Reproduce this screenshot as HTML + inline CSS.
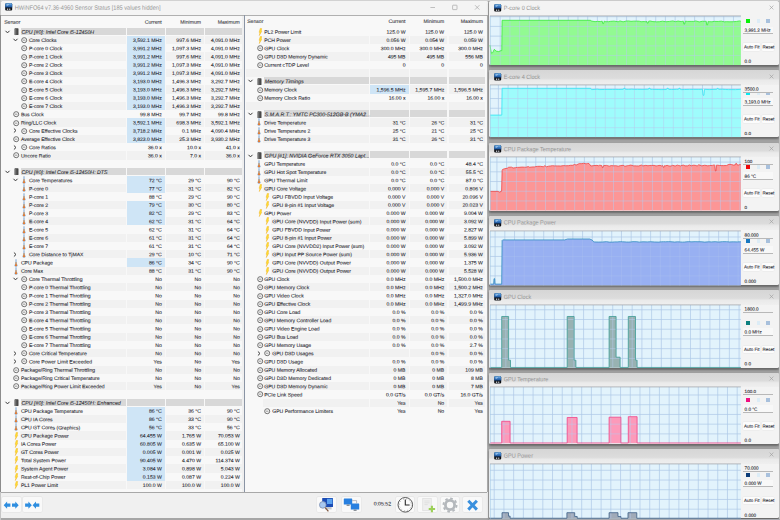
<!DOCTYPE html><html><head><meta charset="utf-8"><title>HWiNFO64 Sensor Status</title><style>
html,body{margin:0;padding:0}
body{width:780px;height:520px;overflow:hidden;position:relative;background:#a6a6a6;font-family:"Liberation Sans",sans-serif;font-size:5.1px;color:#2a2a30}
div,svg{position:absolute}
.i{overflow:visible}
.t{white-space:nowrap;height:8.24px;line-height:8.24px;font-size:5.1px}
.v{width:60px;text-align:right}
.gh{font-style:italic;color:#26262c}
.hd{color:#34343a}
.ab{height:8.24px;background:#f1f1f1}
.hb{height:6.95px;background:#d8d8d8}
.hl{height:8.34px;background:#cfe5f6}
.mw{left:0.7px;top:0.9px;width:487.1px;height:516.7px;background:#f0f0f0;border-radius:1.5px 1.5px 0 0}
.pn{background:#f8f8f8}
.tt{color:#8e8e8e;font-size:5.75px;height:15px;line-height:15px;white-space:nowrap}
.gw{background:#f3f3f3;border-radius:1.6px;box-shadow:0 1.8px 2.2px 0px rgba(60,60,60,0.6)}
.wt{color:#8e8e8e;font-size:5.9px;height:10px;line-height:10px}
.sm{font-size:4.6px;height:7px;line-height:7px;color:#2a2a30}
.ul{left:743.4px;width:29.8px;height:0.55px;background:#b8b8b8}
.vb{left:743.4px;width:29.8px;height:7px;background:#f8f8f8}
.sw{width:3.9px;height:4px}
.bt{height:7.6px;line-height:7.6px;font-size:4.5px;text-align:center;background:#fcfcfc;border-radius:1px;box-shadow:0 0 0 0.4px #e8e8e8;color:#2a2a30;white-space:nowrap}
text{stroke:#24242c;stroke-width:0.08px}
text.gh{font-style:italic;fill:#26262c;font-size:5.25px}
text.hd{fill:#34343a}
text.tt{fill:#949494;font-size:6.33px;stroke:none}
text.wt{fill:#949494;font-size:6.24px;stroke:none}
text.sm{font-size:4.6px}
text.bs{font-size:4.5px}
text.tm{font-size:5.2px}
.tb{background:#f9f9f9;border-radius:1px;box-shadow:0 0 0 0.4px #e0e0e0}
</style></head><body>
<div style="left:0;top:0;width:780px;height:1.1px;background:#d2d2d2"></div>
<div style="left:0;top:0;width:1px;height:520px;background:#c6c6c6"></div>
<div class="mw"></div>
<div style="left:0.7px;top:0.9px;width:487.1px;height:14.2px;background:#f4f4f4;border-radius:1.5px 1.5px 0 0"></div>
<svg class="i" style="left:4.60px;top:3.10px" width="7.4" height="7.8" viewBox="0 0 7.4 7.8"><defs><linearGradient id="fg0" x1="0" y1="0" x2="0" y2="1"><stop offset="0" stop-color="#5aa8f0"/><stop offset="1" stop-color="#174a90"/></linearGradient></defs><rect x="0.2" y="0.2" width="7" height="7.4" rx="1.1" fill="#0c0e12"/><path d="M1.3 0.2H6.1A1.1 1.1 0 0 1 7.2 1.3V4.6H0.2V1.3A1.1 1.1 0 0 1 1.3 0.2Z" fill="url(#fg0)"/><path d="M2.2 0.9V3.0M3.3 0.9V2.2M4.6 1.0H5.6" stroke="#e8f2fc" stroke-width="0.55" fill="none"/><rect x="1.9" y="5.5" width="1.3" height="1.5" fill="#b8bcc4"/><rect x="3.9" y="5.5" width="1.5" height="1.5" fill="#9ca0a8"/></svg>
<svg class="i" style="left:428px;top:3px" width="56" height="10" viewBox="428 3 56 10"><path d="M430.4 7.5H435" stroke="#9a9a9a" stroke-width="0.6"/><rect x="452.6" y="5.2" width="4.4" height="4.4" rx="0.5" fill="none" stroke="#9a9a9a" stroke-width="0.6"/><path d="M475 5.2L479.4 9.6M479.4 5.2L475 9.6" stroke="#9a9a9a" stroke-width="0.6"/></svg>
<div style="left:0.7px;top:14.8px;width:487.1px;height:0.7px;background:#b0b0b0"></div>
<div class="pn" style="left:1.0px;top:15.7px;width:242.8px;height:476px"></div>
<div class="pn" style="left:244.9px;top:15.7px;width:242.0px;height:476px"></div>
<div style="left:242.2px;top:15.7px;width:1.6px;height:476px;background:#efefef"></div>
<div style="left:243.85px;top:15.3px;width:0.7px;height:476.6px;background:#8a94a4"></div>
<div style="left:0;top:15.3px;width:1.0px;height:477.2px;background:#8c8c8c"></div>
<div style="left:486.8px;top:15.3px;width:0.7px;height:476.6px;background:#b0b0b0"></div>
<div style="left:0.9px;top:491.7px;width:486.6px;height:0.8px;background:#a8a8a8"></div>


<div class="hb" style="left:20.70px;top:27.80px;width:105.10px"></div>
<div class="hb" style="left:127.00px;top:27.80px;width:38.00px"></div>
<div class="hb" style="left:166.20px;top:27.80px;width:37.90px"></div>
<div class="hb" style="left:205.30px;top:27.80px;width:36.70px"></div>
<svg class="i" style="left:5.10px;top:30.02px" width="5" height="4" viewBox="0 0 5 4"><path d="M0.5 0.8L2.5 2.9L4.5 0.8" fill="none" stroke="#3a3a3a" stroke-width="1.0"/></svg>
<svg class="i" style="left:13.80px;top:28.12px" width="5" height="7.4" viewBox="0 0 5 7.4"><rect x="0.5" y="0.3" width="4" height="6.8" rx="0.6" fill="#4a4a4a"/><rect x="1.1" y="0.3" width="1.2" height="6.8" fill="#777"/></svg>
<div class="ab" style="left:28.10px;top:35.94px;width:97.70px"></div>
<div class="ab" style="left:127.00px;top:35.94px;width:38.00px"></div>
<div class="ab" style="left:166.20px;top:35.94px;width:37.90px"></div>
<div class="ab" style="left:205.30px;top:35.94px;width:36.70px"></div>
<div class="hl" style="left:127.00px;top:35.89px;width:38.00px"></div>
<svg class="i" style="left:12.90px;top:38.26px" width="5" height="4" viewBox="0 0 5 4"><path d="M0.5 0.8L2.5 2.9L4.5 0.8" fill="none" stroke="#3a3a3a" stroke-width="1.0"/></svg>
<svg class="i" style="left:21.00px;top:37.11px" width="6.4" height="6.4" viewBox="0 0 6.4 6.4"><circle cx="3.2" cy="3.2" r="2.55" fill="#f2f2f2" stroke="#5e5e5e" stroke-width="0.85"/><path d="M1.9 3.2H4.4" stroke="#777" stroke-width="0.7"/></svg>
<div class="hl" style="left:127.00px;top:44.13px;width:38.00px"></div>
<svg class="i" style="left:21.00px;top:45.35px" width="6.4" height="6.4" viewBox="0 0 6.4 6.4"><circle cx="3.2" cy="3.2" r="2.55" fill="#f2f2f2" stroke="#5e5e5e" stroke-width="0.85"/><path d="M1.9 3.2H4.4" stroke="#777" stroke-width="0.7"/></svg>
<div class="ab" style="left:28.10px;top:52.42px;width:97.70px"></div>
<div class="ab" style="left:127.00px;top:52.42px;width:38.00px"></div>
<div class="ab" style="left:166.20px;top:52.42px;width:37.90px"></div>
<div class="ab" style="left:205.30px;top:52.42px;width:36.70px"></div>
<div class="hl" style="left:127.00px;top:52.37px;width:38.00px"></div>
<svg class="i" style="left:21.00px;top:53.59px" width="6.4" height="6.4" viewBox="0 0 6.4 6.4"><circle cx="3.2" cy="3.2" r="2.55" fill="#f2f2f2" stroke="#5e5e5e" stroke-width="0.85"/><path d="M1.9 3.2H4.4" stroke="#777" stroke-width="0.7"/></svg>
<div class="hl" style="left:127.00px;top:60.61px;width:38.00px"></div>
<svg class="i" style="left:21.00px;top:61.83px" width="6.4" height="6.4" viewBox="0 0 6.4 6.4"><circle cx="3.2" cy="3.2" r="2.55" fill="#f2f2f2" stroke="#5e5e5e" stroke-width="0.85"/><path d="M1.9 3.2H4.4" stroke="#777" stroke-width="0.7"/></svg>
<div class="ab" style="left:28.10px;top:68.90px;width:97.70px"></div>
<div class="ab" style="left:127.00px;top:68.90px;width:38.00px"></div>
<div class="ab" style="left:166.20px;top:68.90px;width:37.90px"></div>
<div class="ab" style="left:205.30px;top:68.90px;width:36.70px"></div>
<div class="hl" style="left:127.00px;top:68.85px;width:38.00px"></div>
<svg class="i" style="left:21.00px;top:70.07px" width="6.4" height="6.4" viewBox="0 0 6.4 6.4"><circle cx="3.2" cy="3.2" r="2.55" fill="#f2f2f2" stroke="#5e5e5e" stroke-width="0.85"/><path d="M1.9 3.2H4.4" stroke="#777" stroke-width="0.7"/></svg>
<div class="hl" style="left:127.00px;top:77.09px;width:38.00px"></div>
<svg class="i" style="left:21.00px;top:78.31px" width="6.4" height="6.4" viewBox="0 0 6.4 6.4"><circle cx="3.2" cy="3.2" r="2.55" fill="#f2f2f2" stroke="#5e5e5e" stroke-width="0.85"/><path d="M1.9 3.2H4.4" stroke="#777" stroke-width="0.7"/></svg>
<div class="ab" style="left:28.10px;top:85.38px;width:97.70px"></div>
<div class="ab" style="left:127.00px;top:85.38px;width:38.00px"></div>
<div class="ab" style="left:166.20px;top:85.38px;width:37.90px"></div>
<div class="ab" style="left:205.30px;top:85.38px;width:36.70px"></div>
<div class="hl" style="left:127.00px;top:85.33px;width:38.00px"></div>
<svg class="i" style="left:21.00px;top:86.55px" width="6.4" height="6.4" viewBox="0 0 6.4 6.4"><circle cx="3.2" cy="3.2" r="2.55" fill="#f2f2f2" stroke="#5e5e5e" stroke-width="0.85"/><path d="M1.9 3.2H4.4" stroke="#777" stroke-width="0.7"/></svg>
<div class="hl" style="left:127.00px;top:93.57px;width:38.00px"></div>
<svg class="i" style="left:21.00px;top:94.79px" width="6.4" height="6.4" viewBox="0 0 6.4 6.4"><circle cx="3.2" cy="3.2" r="2.55" fill="#f2f2f2" stroke="#5e5e5e" stroke-width="0.85"/><path d="M1.9 3.2H4.4" stroke="#777" stroke-width="0.7"/></svg>
<div class="ab" style="left:28.10px;top:101.86px;width:97.70px"></div>
<div class="ab" style="left:127.00px;top:101.86px;width:38.00px"></div>
<div class="ab" style="left:166.20px;top:101.86px;width:37.90px"></div>
<div class="ab" style="left:205.30px;top:101.86px;width:36.70px"></div>
<div class="hl" style="left:127.00px;top:101.81px;width:38.00px"></div>
<svg class="i" style="left:21.00px;top:103.03px" width="6.4" height="6.4" viewBox="0 0 6.4 6.4"><circle cx="3.2" cy="3.2" r="2.55" fill="#f2f2f2" stroke="#5e5e5e" stroke-width="0.85"/><path d="M1.9 3.2H4.4" stroke="#777" stroke-width="0.7"/></svg>
<svg class="i" style="left:13.20px;top:111.27px" width="6.4" height="6.4" viewBox="0 0 6.4 6.4"><circle cx="3.2" cy="3.2" r="2.55" fill="#f2f2f2" stroke="#5e5e5e" stroke-width="0.85"/><path d="M1.9 3.2H4.4" stroke="#777" stroke-width="0.7"/></svg>
<div class="ab" style="left:20.10px;top:118.34px;width:105.70px"></div>
<div class="ab" style="left:127.00px;top:118.34px;width:38.00px"></div>
<div class="ab" style="left:166.20px;top:118.34px;width:37.90px"></div>
<div class="ab" style="left:205.30px;top:118.34px;width:36.70px"></div>
<div class="hl" style="left:127.00px;top:118.29px;width:38.00px"></div>
<svg class="i" style="left:13.20px;top:119.51px" width="6.4" height="6.4" viewBox="0 0 6.4 6.4"><circle cx="3.2" cy="3.2" r="2.55" fill="#f2f2f2" stroke="#5e5e5e" stroke-width="0.85"/><path d="M1.9 3.2H4.4" stroke="#777" stroke-width="0.7"/></svg>
<div class="hl" style="left:127.00px;top:126.53px;width:38.00px"></div>
<svg class="i" style="left:13.20px;top:128.20px" width="4" height="5" viewBox="0 0 4 5"><path d="M0.9 0.5L3.0 2.5L0.9 4.5" fill="none" stroke="#3a3a3a" stroke-width="1.0"/></svg>
<svg class="i" style="left:21.00px;top:127.75px" width="6.4" height="6.4" viewBox="0 0 6.4 6.4"><circle cx="3.2" cy="3.2" r="2.55" fill="#f2f2f2" stroke="#5e5e5e" stroke-width="0.85"/><path d="M1.9 3.2H4.4" stroke="#777" stroke-width="0.7"/></svg>
<div class="ab" style="left:20.10px;top:134.82px;width:105.70px"></div>
<div class="ab" style="left:127.00px;top:134.82px;width:38.00px"></div>
<div class="ab" style="left:166.20px;top:134.82px;width:37.90px"></div>
<div class="ab" style="left:205.30px;top:134.82px;width:36.70px"></div>
<div class="hl" style="left:127.00px;top:134.77px;width:38.00px"></div>
<svg class="i" style="left:13.20px;top:135.99px" width="6.4" height="6.4" viewBox="0 0 6.4 6.4"><circle cx="3.2" cy="3.2" r="2.55" fill="#f2f2f2" stroke="#5e5e5e" stroke-width="0.85"/><path d="M1.9 3.2H4.4" stroke="#777" stroke-width="0.7"/></svg>
<svg class="i" style="left:13.20px;top:144.68px" width="4" height="5" viewBox="0 0 4 5"><path d="M0.9 0.5L3.0 2.5L0.9 4.5" fill="none" stroke="#3a3a3a" stroke-width="1.0"/></svg>
<svg class="i" style="left:21.00px;top:144.23px" width="6.4" height="6.4" viewBox="0 0 6.4 6.4"><circle cx="3.2" cy="3.2" r="2.55" fill="#f2f2f2" stroke="#5e5e5e" stroke-width="0.85"/><path d="M1.9 3.2H4.4" stroke="#777" stroke-width="0.7"/></svg>
<div class="ab" style="left:20.10px;top:151.30px;width:105.70px"></div>
<div class="ab" style="left:127.00px;top:151.30px;width:38.00px"></div>
<div class="ab" style="left:166.20px;top:151.30px;width:37.90px"></div>
<div class="ab" style="left:205.30px;top:151.30px;width:36.70px"></div>
<svg class="i" style="left:13.20px;top:152.47px" width="6.4" height="6.4" viewBox="0 0 6.4 6.4"><circle cx="3.2" cy="3.2" r="2.55" fill="#f2f2f2" stroke="#5e5e5e" stroke-width="0.85"/><path d="M1.9 3.2H4.4" stroke="#777" stroke-width="0.7"/></svg>
<div class="hb" style="left:20.70px;top:167.88px;width:105.10px"></div>
<div class="hb" style="left:127.00px;top:167.88px;width:38.00px"></div>
<div class="hb" style="left:166.20px;top:167.88px;width:37.90px"></div>
<div class="hb" style="left:205.30px;top:167.88px;width:36.70px"></div>
<svg class="i" style="left:5.10px;top:170.10px" width="5" height="4" viewBox="0 0 5 4"><path d="M0.5 0.8L2.5 2.9L4.5 0.8" fill="none" stroke="#3a3a3a" stroke-width="1.0"/></svg>
<svg class="i" style="left:13.80px;top:168.20px" width="5" height="7.4" viewBox="0 0 5 7.4"><rect x="0.5" y="0.3" width="4" height="6.8" rx="0.6" fill="#4a4a4a"/><rect x="1.1" y="0.3" width="1.2" height="6.8" fill="#777"/></svg>
<div class="hl" style="left:127.00px;top:175.97px;width:38.00px"></div>
<svg class="i" style="left:12.90px;top:178.34px" width="5" height="4" viewBox="0 0 5 4"><path d="M0.5 0.8L2.5 2.9L4.5 0.8" fill="none" stroke="#3a3a3a" stroke-width="1.0"/></svg>
<svg class="i" style="left:21.65px;top:176.14px" width="4" height="8" viewBox="0 0 4 8"><rect x="1.05" y="0.15" width="1.9" height="6.2" rx="0.95" fill="#94b4d6"/><rect x="1.55" y="0.7" width="0.9" height="2.6" fill="#dce8f4"/><circle cx="2" cy="6.25" r="1.5" fill="#8eaed2"/><rect x="1.55" y="3.2" width="0.9" height="3.1" fill="#f08a2c"/><circle cx="2" cy="6.25" r="0.95" fill="#f07218"/></svg>
<div class="ab" style="left:28.10px;top:184.26px;width:97.70px"></div>
<div class="ab" style="left:127.00px;top:184.26px;width:38.00px"></div>
<div class="ab" style="left:166.20px;top:184.26px;width:37.90px"></div>
<div class="ab" style="left:205.30px;top:184.26px;width:36.70px"></div>
<div class="hl" style="left:127.00px;top:184.21px;width:38.00px"></div>
<svg class="i" style="left:21.65px;top:184.38px" width="4" height="8" viewBox="0 0 4 8"><rect x="1.05" y="0.15" width="1.9" height="6.2" rx="0.95" fill="#94b4d6"/><rect x="1.55" y="0.7" width="0.9" height="2.6" fill="#dce8f4"/><circle cx="2" cy="6.25" r="1.5" fill="#8eaed2"/><rect x="1.55" y="3.2" width="0.9" height="3.1" fill="#f08a2c"/><circle cx="2" cy="6.25" r="0.95" fill="#f07218"/></svg>
<svg class="i" style="left:21.65px;top:192.62px" width="4" height="8" viewBox="0 0 4 8"><rect x="1.05" y="0.15" width="1.9" height="6.2" rx="0.95" fill="#94b4d6"/><rect x="1.55" y="0.7" width="0.9" height="2.6" fill="#dce8f4"/><circle cx="2" cy="6.25" r="1.5" fill="#8eaed2"/><rect x="1.55" y="3.2" width="0.9" height="3.1" fill="#f08a2c"/><circle cx="2" cy="6.25" r="0.95" fill="#f07218"/></svg>
<div class="ab" style="left:28.10px;top:200.74px;width:97.70px"></div>
<div class="ab" style="left:127.00px;top:200.74px;width:38.00px"></div>
<div class="ab" style="left:166.20px;top:200.74px;width:37.90px"></div>
<div class="ab" style="left:205.30px;top:200.74px;width:36.70px"></div>
<div class="hl" style="left:127.00px;top:200.69px;width:38.00px"></div>
<svg class="i" style="left:21.65px;top:200.86px" width="4" height="8" viewBox="0 0 4 8"><rect x="1.05" y="0.15" width="1.9" height="6.2" rx="0.95" fill="#94b4d6"/><rect x="1.55" y="0.7" width="0.9" height="2.6" fill="#dce8f4"/><circle cx="2" cy="6.25" r="1.5" fill="#8eaed2"/><rect x="1.55" y="3.2" width="0.9" height="3.1" fill="#f08a2c"/><circle cx="2" cy="6.25" r="0.95" fill="#f07218"/></svg>
<div class="hl" style="left:127.00px;top:208.93px;width:38.00px"></div>
<svg class="i" style="left:21.65px;top:209.10px" width="4" height="8" viewBox="0 0 4 8"><rect x="1.05" y="0.15" width="1.9" height="6.2" rx="0.95" fill="#94b4d6"/><rect x="1.55" y="0.7" width="0.9" height="2.6" fill="#dce8f4"/><circle cx="2" cy="6.25" r="1.5" fill="#8eaed2"/><rect x="1.55" y="3.2" width="0.9" height="3.1" fill="#f08a2c"/><circle cx="2" cy="6.25" r="0.95" fill="#f07218"/></svg>
<div class="ab" style="left:28.10px;top:217.22px;width:97.70px"></div>
<div class="ab" style="left:127.00px;top:217.22px;width:38.00px"></div>
<div class="ab" style="left:166.20px;top:217.22px;width:37.90px"></div>
<div class="ab" style="left:205.30px;top:217.22px;width:36.70px"></div>
<div class="hl" style="left:127.00px;top:217.17px;width:38.00px"></div>
<svg class="i" style="left:21.65px;top:217.34px" width="4" height="8" viewBox="0 0 4 8"><rect x="1.05" y="0.15" width="1.9" height="6.2" rx="0.95" fill="#94b4d6"/><rect x="1.55" y="0.7" width="0.9" height="2.6" fill="#dce8f4"/><circle cx="2" cy="6.25" r="1.5" fill="#8eaed2"/><rect x="1.55" y="3.2" width="0.9" height="3.1" fill="#f08a2c"/><circle cx="2" cy="6.25" r="0.95" fill="#f07218"/></svg>
<svg class="i" style="left:21.65px;top:225.58px" width="4" height="8" viewBox="0 0 4 8"><rect x="1.05" y="0.15" width="1.9" height="6.2" rx="0.95" fill="#94b4d6"/><rect x="1.55" y="0.7" width="0.9" height="2.6" fill="#dce8f4"/><circle cx="2" cy="6.25" r="1.5" fill="#8eaed2"/><rect x="1.55" y="3.2" width="0.9" height="3.1" fill="#f08a2c"/><circle cx="2" cy="6.25" r="0.95" fill="#f07218"/></svg>
<div class="ab" style="left:28.10px;top:233.70px;width:97.70px"></div>
<div class="ab" style="left:127.00px;top:233.70px;width:38.00px"></div>
<div class="ab" style="left:166.20px;top:233.70px;width:37.90px"></div>
<div class="ab" style="left:205.30px;top:233.70px;width:36.70px"></div>
<svg class="i" style="left:21.65px;top:233.82px" width="4" height="8" viewBox="0 0 4 8"><rect x="1.05" y="0.15" width="1.9" height="6.2" rx="0.95" fill="#94b4d6"/><rect x="1.55" y="0.7" width="0.9" height="2.6" fill="#dce8f4"/><circle cx="2" cy="6.25" r="1.5" fill="#8eaed2"/><rect x="1.55" y="3.2" width="0.9" height="3.1" fill="#f08a2c"/><circle cx="2" cy="6.25" r="0.95" fill="#f07218"/></svg>
<svg class="i" style="left:21.65px;top:242.06px" width="4" height="8" viewBox="0 0 4 8"><rect x="1.05" y="0.15" width="1.9" height="6.2" rx="0.95" fill="#94b4d6"/><rect x="1.55" y="0.7" width="0.9" height="2.6" fill="#dce8f4"/><circle cx="2" cy="6.25" r="1.5" fill="#8eaed2"/><rect x="1.55" y="3.2" width="0.9" height="3.1" fill="#f08a2c"/><circle cx="2" cy="6.25" r="0.95" fill="#f07218"/></svg>
<div class="ab" style="left:28.10px;top:250.18px;width:97.70px"></div>
<div class="ab" style="left:127.00px;top:250.18px;width:38.00px"></div>
<div class="ab" style="left:166.20px;top:250.18px;width:37.90px"></div>
<div class="ab" style="left:205.30px;top:250.18px;width:36.70px"></div>
<svg class="i" style="left:13.20px;top:251.80px" width="4" height="5" viewBox="0 0 4 5"><path d="M0.9 0.5L3.0 2.5L0.9 4.5" fill="none" stroke="#3a3a3a" stroke-width="1.0"/></svg>
<svg class="i" style="left:21.65px;top:250.30px" width="4" height="8" viewBox="0 0 4 8"><rect x="1.05" y="0.15" width="1.9" height="6.2" rx="0.95" fill="#94b4d6"/><rect x="1.55" y="0.7" width="0.9" height="2.6" fill="#dce8f4"/><circle cx="2" cy="6.25" r="1.5" fill="#8eaed2"/><rect x="1.55" y="3.2" width="0.9" height="3.1" fill="#f08a2c"/><circle cx="2" cy="6.25" r="0.95" fill="#f07218"/></svg>
<div class="hl" style="left:127.00px;top:258.37px;width:38.00px"></div>
<svg class="i" style="left:13.85px;top:258.54px" width="4" height="8" viewBox="0 0 4 8"><rect x="1.05" y="0.15" width="1.9" height="6.2" rx="0.95" fill="#94b4d6"/><rect x="1.55" y="0.7" width="0.9" height="2.6" fill="#dce8f4"/><circle cx="2" cy="6.25" r="1.5" fill="#8eaed2"/><rect x="1.55" y="3.2" width="0.9" height="3.1" fill="#f08a2c"/><circle cx="2" cy="6.25" r="0.95" fill="#f07218"/></svg>
<div class="ab" style="left:20.10px;top:266.66px;width:105.70px"></div>
<div class="ab" style="left:127.00px;top:266.66px;width:38.00px"></div>
<div class="ab" style="left:166.20px;top:266.66px;width:37.90px"></div>
<div class="ab" style="left:205.30px;top:266.66px;width:36.70px"></div>
<svg class="i" style="left:13.85px;top:266.78px" width="4" height="8" viewBox="0 0 4 8"><rect x="1.05" y="0.15" width="1.9" height="6.2" rx="0.95" fill="#94b4d6"/><rect x="1.55" y="0.7" width="0.9" height="2.6" fill="#dce8f4"/><circle cx="2" cy="6.25" r="1.5" fill="#8eaed2"/><rect x="1.55" y="3.2" width="0.9" height="3.1" fill="#f08a2c"/><circle cx="2" cy="6.25" r="0.95" fill="#f07218"/></svg>
<svg class="i" style="left:12.90px;top:277.22px" width="5" height="4" viewBox="0 0 5 4"><path d="M0.5 0.8L2.5 2.9L4.5 0.8" fill="none" stroke="#3a3a3a" stroke-width="1.0"/></svg>
<svg class="i" style="left:21.00px;top:276.07px" width="6.4" height="6.4" viewBox="0 0 6.4 6.4"><circle cx="3.2" cy="3.2" r="2.55" fill="#f2f2f2" stroke="#5e5e5e" stroke-width="0.85"/><path d="M1.9 3.2H4.4" stroke="#777" stroke-width="0.7"/></svg>
<div class="ab" style="left:28.10px;top:283.14px;width:97.70px"></div>
<div class="ab" style="left:127.00px;top:283.14px;width:38.00px"></div>
<div class="ab" style="left:166.20px;top:283.14px;width:37.90px"></div>
<div class="ab" style="left:205.30px;top:283.14px;width:36.70px"></div>
<svg class="i" style="left:21.00px;top:284.31px" width="6.4" height="6.4" viewBox="0 0 6.4 6.4"><circle cx="3.2" cy="3.2" r="2.55" fill="#f2f2f2" stroke="#5e5e5e" stroke-width="0.85"/><path d="M1.9 3.2H4.4" stroke="#777" stroke-width="0.7"/></svg>
<svg class="i" style="left:21.00px;top:292.55px" width="6.4" height="6.4" viewBox="0 0 6.4 6.4"><circle cx="3.2" cy="3.2" r="2.55" fill="#f2f2f2" stroke="#5e5e5e" stroke-width="0.85"/><path d="M1.9 3.2H4.4" stroke="#777" stroke-width="0.7"/></svg>
<div class="ab" style="left:28.10px;top:299.62px;width:97.70px"></div>
<div class="ab" style="left:127.00px;top:299.62px;width:38.00px"></div>
<div class="ab" style="left:166.20px;top:299.62px;width:37.90px"></div>
<div class="ab" style="left:205.30px;top:299.62px;width:36.70px"></div>
<svg class="i" style="left:21.00px;top:300.79px" width="6.4" height="6.4" viewBox="0 0 6.4 6.4"><circle cx="3.2" cy="3.2" r="2.55" fill="#f2f2f2" stroke="#5e5e5e" stroke-width="0.85"/><path d="M1.9 3.2H4.4" stroke="#777" stroke-width="0.7"/></svg>
<svg class="i" style="left:21.00px;top:309.03px" width="6.4" height="6.4" viewBox="0 0 6.4 6.4"><circle cx="3.2" cy="3.2" r="2.55" fill="#f2f2f2" stroke="#5e5e5e" stroke-width="0.85"/><path d="M1.9 3.2H4.4" stroke="#777" stroke-width="0.7"/></svg>
<div class="ab" style="left:28.10px;top:316.10px;width:97.70px"></div>
<div class="ab" style="left:127.00px;top:316.10px;width:38.00px"></div>
<div class="ab" style="left:166.20px;top:316.10px;width:37.90px"></div>
<div class="ab" style="left:205.30px;top:316.10px;width:36.70px"></div>
<svg class="i" style="left:21.00px;top:317.27px" width="6.4" height="6.4" viewBox="0 0 6.4 6.4"><circle cx="3.2" cy="3.2" r="2.55" fill="#f2f2f2" stroke="#5e5e5e" stroke-width="0.85"/><path d="M1.9 3.2H4.4" stroke="#777" stroke-width="0.7"/></svg>
<svg class="i" style="left:21.00px;top:325.51px" width="6.4" height="6.4" viewBox="0 0 6.4 6.4"><circle cx="3.2" cy="3.2" r="2.55" fill="#f2f2f2" stroke="#5e5e5e" stroke-width="0.85"/><path d="M1.9 3.2H4.4" stroke="#777" stroke-width="0.7"/></svg>
<div class="ab" style="left:28.10px;top:332.58px;width:97.70px"></div>
<div class="ab" style="left:127.00px;top:332.58px;width:38.00px"></div>
<div class="ab" style="left:166.20px;top:332.58px;width:37.90px"></div>
<div class="ab" style="left:205.30px;top:332.58px;width:36.70px"></div>
<svg class="i" style="left:21.00px;top:333.75px" width="6.4" height="6.4" viewBox="0 0 6.4 6.4"><circle cx="3.2" cy="3.2" r="2.55" fill="#f2f2f2" stroke="#5e5e5e" stroke-width="0.85"/><path d="M1.9 3.2H4.4" stroke="#777" stroke-width="0.7"/></svg>
<svg class="i" style="left:21.00px;top:341.99px" width="6.4" height="6.4" viewBox="0 0 6.4 6.4"><circle cx="3.2" cy="3.2" r="2.55" fill="#f2f2f2" stroke="#5e5e5e" stroke-width="0.85"/><path d="M1.9 3.2H4.4" stroke="#777" stroke-width="0.7"/></svg>
<div class="ab" style="left:28.10px;top:349.06px;width:97.70px"></div>
<div class="ab" style="left:127.00px;top:349.06px;width:38.00px"></div>
<div class="ab" style="left:166.20px;top:349.06px;width:37.90px"></div>
<div class="ab" style="left:205.30px;top:349.06px;width:36.70px"></div>
<svg class="i" style="left:13.20px;top:350.68px" width="4" height="5" viewBox="0 0 4 5"><path d="M0.9 0.5L3.0 2.5L0.9 4.5" fill="none" stroke="#3a3a3a" stroke-width="1.0"/></svg>
<svg class="i" style="left:21.00px;top:350.23px" width="6.4" height="6.4" viewBox="0 0 6.4 6.4"><circle cx="3.2" cy="3.2" r="2.55" fill="#f2f2f2" stroke="#5e5e5e" stroke-width="0.85"/><path d="M1.9 3.2H4.4" stroke="#777" stroke-width="0.7"/></svg>
<svg class="i" style="left:13.20px;top:358.92px" width="4" height="5" viewBox="0 0 4 5"><path d="M0.9 0.5L3.0 2.5L0.9 4.5" fill="none" stroke="#3a3a3a" stroke-width="1.0"/></svg>
<svg class="i" style="left:21.00px;top:358.47px" width="6.4" height="6.4" viewBox="0 0 6.4 6.4"><circle cx="3.2" cy="3.2" r="2.55" fill="#f2f2f2" stroke="#5e5e5e" stroke-width="0.85"/><path d="M1.9 3.2H4.4" stroke="#777" stroke-width="0.7"/></svg>
<div class="ab" style="left:20.10px;top:365.54px;width:105.70px"></div>
<div class="ab" style="left:127.00px;top:365.54px;width:38.00px"></div>
<div class="ab" style="left:166.20px;top:365.54px;width:37.90px"></div>
<div class="ab" style="left:205.30px;top:365.54px;width:36.70px"></div>
<svg class="i" style="left:13.20px;top:366.71px" width="6.4" height="6.4" viewBox="0 0 6.4 6.4"><circle cx="3.2" cy="3.2" r="2.55" fill="#f2f2f2" stroke="#5e5e5e" stroke-width="0.85"/><path d="M1.9 3.2H4.4" stroke="#777" stroke-width="0.7"/></svg>
<svg class="i" style="left:13.20px;top:374.95px" width="6.4" height="6.4" viewBox="0 0 6.4 6.4"><circle cx="3.2" cy="3.2" r="2.55" fill="#f2f2f2" stroke="#5e5e5e" stroke-width="0.85"/><path d="M1.9 3.2H4.4" stroke="#777" stroke-width="0.7"/></svg>
<div class="ab" style="left:20.10px;top:382.02px;width:105.70px"></div>
<div class="ab" style="left:127.00px;top:382.02px;width:38.00px"></div>
<div class="ab" style="left:166.20px;top:382.02px;width:37.90px"></div>
<div class="ab" style="left:205.30px;top:382.02px;width:36.70px"></div>
<svg class="i" style="left:13.20px;top:383.19px" width="6.4" height="6.4" viewBox="0 0 6.4 6.4"><circle cx="3.2" cy="3.2" r="2.55" fill="#f2f2f2" stroke="#5e5e5e" stroke-width="0.85"/><path d="M1.9 3.2H4.4" stroke="#777" stroke-width="0.7"/></svg>
<div class="hb" style="left:20.70px;top:398.60px;width:105.10px"></div>
<div class="hb" style="left:127.00px;top:398.60px;width:38.00px"></div>
<div class="hb" style="left:166.20px;top:398.60px;width:37.90px"></div>
<div class="hb" style="left:205.30px;top:398.60px;width:36.70px"></div>
<svg class="i" style="left:5.10px;top:400.82px" width="5" height="4" viewBox="0 0 5 4"><path d="M0.5 0.8L2.5 2.9L4.5 0.8" fill="none" stroke="#3a3a3a" stroke-width="1.0"/></svg>
<svg class="i" style="left:13.80px;top:398.92px" width="5" height="7.4" viewBox="0 0 5 7.4"><rect x="0.5" y="0.3" width="4" height="6.8" rx="0.6" fill="#4a4a4a"/><rect x="1.1" y="0.3" width="1.2" height="6.8" fill="#777"/></svg>
<div class="hl" style="left:127.00px;top:406.69px;width:38.00px"></div>
<svg class="i" style="left:13.85px;top:406.86px" width="4" height="8" viewBox="0 0 4 8"><rect x="1.05" y="0.15" width="1.9" height="6.2" rx="0.95" fill="#94b4d6"/><rect x="1.55" y="0.7" width="0.9" height="2.6" fill="#dce8f4"/><circle cx="2" cy="6.25" r="1.5" fill="#8eaed2"/><rect x="1.55" y="3.2" width="0.9" height="3.1" fill="#f08a2c"/><circle cx="2" cy="6.25" r="0.95" fill="#f07218"/></svg>
<div class="ab" style="left:20.10px;top:414.98px;width:105.70px"></div>
<div class="ab" style="left:127.00px;top:414.98px;width:38.00px"></div>
<div class="ab" style="left:166.20px;top:414.98px;width:37.90px"></div>
<div class="ab" style="left:205.30px;top:414.98px;width:36.70px"></div>
<div class="hl" style="left:127.00px;top:414.93px;width:38.00px"></div>
<svg class="i" style="left:13.85px;top:415.10px" width="4" height="8" viewBox="0 0 4 8"><rect x="1.05" y="0.15" width="1.9" height="6.2" rx="0.95" fill="#94b4d6"/><rect x="1.55" y="0.7" width="0.9" height="2.6" fill="#dce8f4"/><circle cx="2" cy="6.25" r="1.5" fill="#8eaed2"/><rect x="1.55" y="3.2" width="0.9" height="3.1" fill="#f08a2c"/><circle cx="2" cy="6.25" r="0.95" fill="#f07218"/></svg>
<div class="hl" style="left:127.00px;top:423.17px;width:38.00px"></div>
<svg class="i" style="left:13.85px;top:423.34px" width="4" height="8" viewBox="0 0 4 8"><rect x="1.05" y="0.15" width="1.9" height="6.2" rx="0.95" fill="#94b4d6"/><rect x="1.55" y="0.7" width="0.9" height="2.6" fill="#dce8f4"/><circle cx="2" cy="6.25" r="1.5" fill="#8eaed2"/><rect x="1.55" y="3.2" width="0.9" height="3.1" fill="#f08a2c"/><circle cx="2" cy="6.25" r="0.95" fill="#f07218"/></svg>
<div class="ab" style="left:20.10px;top:431.46px;width:105.70px"></div>
<div class="ab" style="left:127.00px;top:431.46px;width:38.00px"></div>
<div class="ab" style="left:166.20px;top:431.46px;width:37.90px"></div>
<div class="ab" style="left:205.30px;top:431.46px;width:36.70px"></div>
<div class="hl" style="left:127.00px;top:431.41px;width:38.00px"></div>
<svg class="i" style="left:14.20px;top:431.58px" width="4.4" height="8" viewBox="0 0 4.4 8"><path d="M2.2 0.4L3.7 0.5L3.2 3.2L3.8 3.3L1.3 7.6L1.9 4.4L1.1 4.3Z" fill="#ffe030" stroke="#f0a818" stroke-width="0.4" stroke-linejoin="round"/></svg>
<div class="hl" style="left:127.00px;top:439.65px;width:38.00px"></div>
<svg class="i" style="left:14.20px;top:439.82px" width="4.4" height="8" viewBox="0 0 4.4 8"><path d="M2.2 0.4L3.7 0.5L3.2 3.2L3.8 3.3L1.3 7.6L1.9 4.4L1.1 4.3Z" fill="#ffe030" stroke="#f0a818" stroke-width="0.4" stroke-linejoin="round"/></svg>
<div class="ab" style="left:20.10px;top:447.94px;width:105.70px"></div>
<div class="ab" style="left:127.00px;top:447.94px;width:38.00px"></div>
<div class="ab" style="left:166.20px;top:447.94px;width:37.90px"></div>
<div class="ab" style="left:205.30px;top:447.94px;width:36.70px"></div>
<div class="hl" style="left:127.00px;top:447.89px;width:38.00px"></div>
<svg class="i" style="left:14.20px;top:448.06px" width="4.4" height="8" viewBox="0 0 4.4 8"><path d="M2.2 0.4L3.7 0.5L3.2 3.2L3.8 3.3L1.3 7.6L1.9 4.4L1.1 4.3Z" fill="#ffe030" stroke="#f0a818" stroke-width="0.4" stroke-linejoin="round"/></svg>
<div class="hl" style="left:127.00px;top:456.13px;width:38.00px"></div>
<svg class="i" style="left:14.20px;top:456.30px" width="4.4" height="8" viewBox="0 0 4.4 8"><path d="M2.2 0.4L3.7 0.5L3.2 3.2L3.8 3.3L1.3 7.6L1.9 4.4L1.1 4.3Z" fill="#ffe030" stroke="#f0a818" stroke-width="0.4" stroke-linejoin="round"/></svg>
<div class="ab" style="left:20.10px;top:464.42px;width:105.70px"></div>
<div class="ab" style="left:127.00px;top:464.42px;width:38.00px"></div>
<div class="ab" style="left:166.20px;top:464.42px;width:37.90px"></div>
<div class="ab" style="left:205.30px;top:464.42px;width:36.70px"></div>
<div class="hl" style="left:127.00px;top:464.37px;width:38.00px"></div>
<svg class="i" style="left:14.20px;top:464.54px" width="4.4" height="8" viewBox="0 0 4.4 8"><path d="M2.2 0.4L3.7 0.5L3.2 3.2L3.8 3.3L1.3 7.6L1.9 4.4L1.1 4.3Z" fill="#ffe030" stroke="#f0a818" stroke-width="0.4" stroke-linejoin="round"/></svg>
<div class="hl" style="left:127.00px;top:472.61px;width:38.00px"></div>
<svg class="i" style="left:14.20px;top:472.78px" width="4.4" height="8" viewBox="0 0 4.4 8"><path d="M2.2 0.4L3.7 0.5L3.2 3.2L3.8 3.3L1.3 7.6L1.9 4.4L1.1 4.3Z" fill="#ffe030" stroke="#f0a818" stroke-width="0.4" stroke-linejoin="round"/></svg>
<div class="ab" style="left:20.10px;top:480.90px;width:105.70px"></div>
<div class="ab" style="left:127.00px;top:480.90px;width:38.00px"></div>
<div class="ab" style="left:166.20px;top:480.90px;width:37.90px"></div>
<div class="ab" style="left:205.30px;top:480.90px;width:36.70px"></div>
<svg class="i" style="left:14.20px;top:481.02px" width="4.4" height="8" viewBox="0 0 4.4 8"><path d="M2.2 0.4L3.7 0.5L3.2 3.2L3.8 3.3L1.3 7.6L1.9 4.4L1.1 4.3Z" fill="#ffe030" stroke="#f0a818" stroke-width="0.4" stroke-linejoin="round"/></svg>
<svg class="i" style="left:257.50px;top:27.82px" width="4.4" height="8" viewBox="0 0 4.4 8"><path d="M2.2 0.4L3.7 0.5L3.2 3.2L3.8 3.3L1.3 7.6L1.9 4.4L1.1 4.3Z" fill="#ffe030" stroke="#f0a818" stroke-width="0.4" stroke-linejoin="round"/></svg>
<div class="ab" style="left:263.40px;top:35.94px;width:105.80px"></div>
<div class="ab" style="left:370.40px;top:35.94px;width:38.30px"></div>
<div class="ab" style="left:409.90px;top:35.94px;width:37.40px"></div>
<div class="ab" style="left:448.50px;top:35.94px;width:36.90px"></div>
<svg class="i" style="left:257.50px;top:36.06px" width="4.4" height="8" viewBox="0 0 4.4 8"><path d="M2.2 0.4L3.7 0.5L3.2 3.2L3.8 3.3L1.3 7.6L1.9 4.4L1.1 4.3Z" fill="#ffe030" stroke="#f0a818" stroke-width="0.4" stroke-linejoin="round"/></svg>
<svg class="i" style="left:256.50px;top:45.35px" width="6.4" height="6.4" viewBox="0 0 6.4 6.4"><circle cx="3.2" cy="3.2" r="2.55" fill="#f2f2f2" stroke="#5e5e5e" stroke-width="0.85"/><path d="M1.9 3.2H4.4" stroke="#777" stroke-width="0.7"/></svg>
<div class="ab" style="left:263.40px;top:52.42px;width:105.80px"></div>
<div class="ab" style="left:370.40px;top:52.42px;width:38.30px"></div>
<div class="ab" style="left:409.90px;top:52.42px;width:37.40px"></div>
<div class="ab" style="left:448.50px;top:52.42px;width:36.90px"></div>
<svg class="i" style="left:256.50px;top:53.59px" width="6.4" height="6.4" viewBox="0 0 6.4 6.4"><circle cx="3.2" cy="3.2" r="2.55" fill="#f2f2f2" stroke="#5e5e5e" stroke-width="0.85"/><path d="M1.9 3.2H4.4" stroke="#777" stroke-width="0.7"/></svg>
<svg class="i" style="left:256.50px;top:61.83px" width="6.4" height="6.4" viewBox="0 0 6.4 6.4"><circle cx="3.2" cy="3.2" r="2.55" fill="#f2f2f2" stroke="#5e5e5e" stroke-width="0.85"/><path d="M1.9 3.2H4.4" stroke="#777" stroke-width="0.7"/></svg>
<div class="ab" style="left:245.80px;top:68.90px;width:123.40px"></div>
<div class="ab" style="left:370.40px;top:68.90px;width:38.30px"></div>
<div class="ab" style="left:409.90px;top:68.90px;width:37.40px"></div>
<div class="ab" style="left:448.50px;top:68.90px;width:36.90px"></div>
<div class="hb" style="left:264.00px;top:77.24px;width:105.20px"></div>
<div class="hb" style="left:370.40px;top:77.24px;width:38.30px"></div>
<div class="hb" style="left:409.90px;top:77.24px;width:37.40px"></div>
<div class="hb" style="left:448.50px;top:77.24px;width:36.90px"></div>
<svg class="i" style="left:248.40px;top:79.46px" width="5" height="4" viewBox="0 0 5 4"><path d="M0.5 0.8L2.5 2.9L4.5 0.8" fill="none" stroke="#3a3a3a" stroke-width="1.0"/></svg>
<svg class="i" style="left:257.10px;top:77.56px" width="5" height="7.4" viewBox="0 0 5 7.4"><rect x="0.5" y="0.3" width="4" height="6.8" rx="0.6" fill="#4a4a4a"/><rect x="1.1" y="0.3" width="1.2" height="6.8" fill="#777"/></svg>
<div class="ab" style="left:263.40px;top:85.38px;width:105.80px"></div>
<div class="ab" style="left:370.40px;top:85.38px;width:38.30px"></div>
<div class="ab" style="left:409.90px;top:85.38px;width:37.40px"></div>
<div class="ab" style="left:448.50px;top:85.38px;width:36.90px"></div>
<div class="hl" style="left:370.40px;top:85.33px;width:38.30px"></div>
<svg class="i" style="left:256.50px;top:86.55px" width="6.4" height="6.4" viewBox="0 0 6.4 6.4"><circle cx="3.2" cy="3.2" r="2.55" fill="#f2f2f2" stroke="#5e5e5e" stroke-width="0.85"/><path d="M1.9 3.2H4.4" stroke="#777" stroke-width="0.7"/></svg>
<svg class="i" style="left:256.50px;top:94.79px" width="6.4" height="6.4" viewBox="0 0 6.4 6.4"><circle cx="3.2" cy="3.2" r="2.55" fill="#f2f2f2" stroke="#5e5e5e" stroke-width="0.85"/><path d="M1.9 3.2H4.4" stroke="#777" stroke-width="0.7"/></svg>
<div class="ab" style="left:245.80px;top:101.86px;width:123.40px"></div>
<div class="ab" style="left:370.40px;top:101.86px;width:38.30px"></div>
<div class="ab" style="left:409.90px;top:101.86px;width:37.40px"></div>
<div class="ab" style="left:448.50px;top:101.86px;width:36.90px"></div>
<div class="hb" style="left:264.00px;top:110.20px;width:105.20px"></div>
<div class="hb" style="left:370.40px;top:110.20px;width:38.30px"></div>
<div class="hb" style="left:409.90px;top:110.20px;width:37.40px"></div>
<div class="hb" style="left:448.50px;top:110.20px;width:36.90px"></div>
<svg class="i" style="left:248.40px;top:112.42px" width="5" height="4" viewBox="0 0 5 4"><path d="M0.5 0.8L2.5 2.9L4.5 0.8" fill="none" stroke="#3a3a3a" stroke-width="1.0"/></svg>
<svg class="i" style="left:257.10px;top:110.52px" width="5" height="7.4" viewBox="0 0 5 7.4"><rect x="0.5" y="0.3" width="4" height="6.8" rx="0.6" fill="#4a4a4a"/><rect x="1.1" y="0.3" width="1.2" height="6.8" fill="#777"/></svg>
<div class="ab" style="left:263.40px;top:118.34px;width:105.80px"></div>
<div class="ab" style="left:370.40px;top:118.34px;width:38.30px"></div>
<div class="ab" style="left:409.90px;top:118.34px;width:37.40px"></div>
<div class="ab" style="left:448.50px;top:118.34px;width:36.90px"></div>
<svg class="i" style="left:257.15px;top:118.46px" width="4" height="8" viewBox="0 0 4 8"><rect x="1.05" y="0.15" width="1.9" height="6.2" rx="0.95" fill="#94b4d6"/><rect x="1.55" y="0.7" width="0.9" height="2.6" fill="#dce8f4"/><circle cx="2" cy="6.25" r="1.5" fill="#8eaed2"/><rect x="1.55" y="3.2" width="0.9" height="3.1" fill="#f08a2c"/><circle cx="2" cy="6.25" r="0.95" fill="#f07218"/></svg>
<svg class="i" style="left:257.15px;top:126.70px" width="4" height="8" viewBox="0 0 4 8"><rect x="1.05" y="0.15" width="1.9" height="6.2" rx="0.95" fill="#94b4d6"/><rect x="1.55" y="0.7" width="0.9" height="2.6" fill="#dce8f4"/><circle cx="2" cy="6.25" r="1.5" fill="#8eaed2"/><rect x="1.55" y="3.2" width="0.9" height="3.1" fill="#f08a2c"/><circle cx="2" cy="6.25" r="0.95" fill="#f07218"/></svg>
<div class="ab" style="left:263.40px;top:134.82px;width:105.80px"></div>
<div class="ab" style="left:370.40px;top:134.82px;width:38.30px"></div>
<div class="ab" style="left:409.90px;top:134.82px;width:37.40px"></div>
<div class="ab" style="left:448.50px;top:134.82px;width:36.90px"></div>
<svg class="i" style="left:257.15px;top:134.94px" width="4" height="8" viewBox="0 0 4 8"><rect x="1.05" y="0.15" width="1.9" height="6.2" rx="0.95" fill="#94b4d6"/><rect x="1.55" y="0.7" width="0.9" height="2.6" fill="#dce8f4"/><circle cx="2" cy="6.25" r="1.5" fill="#8eaed2"/><rect x="1.55" y="3.2" width="0.9" height="3.1" fill="#f08a2c"/><circle cx="2" cy="6.25" r="0.95" fill="#f07218"/></svg>
<div class="hb" style="left:264.00px;top:151.40px;width:105.20px"></div>
<div class="hb" style="left:370.40px;top:151.40px;width:38.30px"></div>
<div class="hb" style="left:409.90px;top:151.40px;width:37.40px"></div>
<div class="hb" style="left:448.50px;top:151.40px;width:36.90px"></div>
<svg class="i" style="left:248.40px;top:153.62px" width="5" height="4" viewBox="0 0 5 4"><path d="M0.5 0.8L2.5 2.9L4.5 0.8" fill="none" stroke="#3a3a3a" stroke-width="1.0"/></svg>
<svg class="i" style="left:257.10px;top:151.72px" width="5" height="7.4" viewBox="0 0 5 7.4"><rect x="0.5" y="0.3" width="4" height="6.8" rx="0.6" fill="#4a4a4a"/><rect x="1.1" y="0.3" width="1.2" height="6.8" fill="#777"/></svg>
<svg class="i" style="left:257.15px;top:159.66px" width="4" height="8" viewBox="0 0 4 8"><rect x="1.05" y="0.15" width="1.9" height="6.2" rx="0.95" fill="#94b4d6"/><rect x="1.55" y="0.7" width="0.9" height="2.6" fill="#dce8f4"/><circle cx="2" cy="6.25" r="1.5" fill="#8eaed2"/><rect x="1.55" y="3.2" width="0.9" height="3.1" fill="#f08a2c"/><circle cx="2" cy="6.25" r="0.95" fill="#f07218"/></svg>
<div class="ab" style="left:263.40px;top:167.78px;width:105.80px"></div>
<div class="ab" style="left:370.40px;top:167.78px;width:38.30px"></div>
<div class="ab" style="left:409.90px;top:167.78px;width:37.40px"></div>
<div class="ab" style="left:448.50px;top:167.78px;width:36.90px"></div>
<svg class="i" style="left:257.15px;top:167.90px" width="4" height="8" viewBox="0 0 4 8"><rect x="1.05" y="0.15" width="1.9" height="6.2" rx="0.95" fill="#94b4d6"/><rect x="1.55" y="0.7" width="0.9" height="2.6" fill="#dce8f4"/><circle cx="2" cy="6.25" r="1.5" fill="#8eaed2"/><rect x="1.55" y="3.2" width="0.9" height="3.1" fill="#f08a2c"/><circle cx="2" cy="6.25" r="0.95" fill="#f07218"/></svg>
<svg class="i" style="left:257.15px;top:176.14px" width="4" height="8" viewBox="0 0 4 8"><rect x="1.05" y="0.15" width="1.9" height="6.2" rx="0.95" fill="#94b4d6"/><rect x="1.55" y="0.7" width="0.9" height="2.6" fill="#dce8f4"/><circle cx="2" cy="6.25" r="1.5" fill="#8eaed2"/><rect x="1.55" y="3.2" width="0.9" height="3.1" fill="#f08a2c"/><circle cx="2" cy="6.25" r="0.95" fill="#f07218"/></svg>
<div class="ab" style="left:263.40px;top:184.26px;width:105.80px"></div>
<div class="ab" style="left:370.40px;top:184.26px;width:38.30px"></div>
<div class="ab" style="left:409.90px;top:184.26px;width:37.40px"></div>
<div class="ab" style="left:448.50px;top:184.26px;width:36.90px"></div>
<svg class="i" style="left:257.50px;top:184.38px" width="4.4" height="8" viewBox="0 0 4.4 8"><path d="M2.2 0.4L3.7 0.5L3.2 3.2L3.8 3.3L1.3 7.6L1.9 4.4L1.1 4.3Z" fill="#ffe030" stroke="#f0a818" stroke-width="0.4" stroke-linejoin="round"/></svg>
<svg class="i" style="left:265.30px;top:192.62px" width="4.4" height="8" viewBox="0 0 4.4 8"><path d="M2.2 0.4L3.7 0.5L3.2 3.2L3.8 3.3L1.3 7.6L1.9 4.4L1.1 4.3Z" fill="#ffe030" stroke="#f0a818" stroke-width="0.4" stroke-linejoin="round"/></svg>
<div class="ab" style="left:271.40px;top:200.74px;width:97.80px"></div>
<div class="ab" style="left:370.40px;top:200.74px;width:38.30px"></div>
<div class="ab" style="left:409.90px;top:200.74px;width:37.40px"></div>
<div class="ab" style="left:448.50px;top:200.74px;width:36.90px"></div>
<svg class="i" style="left:265.30px;top:200.86px" width="4.4" height="8" viewBox="0 0 4.4 8"><path d="M2.2 0.4L3.7 0.5L3.2 3.2L3.8 3.3L1.3 7.6L1.9 4.4L1.1 4.3Z" fill="#ffe030" stroke="#f0a818" stroke-width="0.4" stroke-linejoin="round"/></svg>
<svg class="i" style="left:257.50px;top:209.10px" width="4.4" height="8" viewBox="0 0 4.4 8"><path d="M2.2 0.4L3.7 0.5L3.2 3.2L3.8 3.3L1.3 7.6L1.9 4.4L1.1 4.3Z" fill="#ffe030" stroke="#f0a818" stroke-width="0.4" stroke-linejoin="round"/></svg>
<div class="ab" style="left:271.40px;top:217.22px;width:97.80px"></div>
<div class="ab" style="left:370.40px;top:217.22px;width:38.30px"></div>
<div class="ab" style="left:409.90px;top:217.22px;width:37.40px"></div>
<div class="ab" style="left:448.50px;top:217.22px;width:36.90px"></div>
<svg class="i" style="left:265.30px;top:217.34px" width="4.4" height="8" viewBox="0 0 4.4 8"><path d="M2.2 0.4L3.7 0.5L3.2 3.2L3.8 3.3L1.3 7.6L1.9 4.4L1.1 4.3Z" fill="#ffe030" stroke="#f0a818" stroke-width="0.4" stroke-linejoin="round"/></svg>
<svg class="i" style="left:265.30px;top:225.58px" width="4.4" height="8" viewBox="0 0 4.4 8"><path d="M2.2 0.4L3.7 0.5L3.2 3.2L3.8 3.3L1.3 7.6L1.9 4.4L1.1 4.3Z" fill="#ffe030" stroke="#f0a818" stroke-width="0.4" stroke-linejoin="round"/></svg>
<div class="ab" style="left:271.40px;top:233.70px;width:97.80px"></div>
<div class="ab" style="left:370.40px;top:233.70px;width:38.30px"></div>
<div class="ab" style="left:409.90px;top:233.70px;width:37.40px"></div>
<div class="ab" style="left:448.50px;top:233.70px;width:36.90px"></div>
<svg class="i" style="left:265.30px;top:233.82px" width="4.4" height="8" viewBox="0 0 4.4 8"><path d="M2.2 0.4L3.7 0.5L3.2 3.2L3.8 3.3L1.3 7.6L1.9 4.4L1.1 4.3Z" fill="#ffe030" stroke="#f0a818" stroke-width="0.4" stroke-linejoin="round"/></svg>
<svg class="i" style="left:265.30px;top:242.06px" width="4.4" height="8" viewBox="0 0 4.4 8"><path d="M2.2 0.4L3.7 0.5L3.2 3.2L3.8 3.3L1.3 7.6L1.9 4.4L1.1 4.3Z" fill="#ffe030" stroke="#f0a818" stroke-width="0.4" stroke-linejoin="round"/></svg>
<div class="ab" style="left:271.40px;top:250.18px;width:97.80px"></div>
<div class="ab" style="left:370.40px;top:250.18px;width:38.30px"></div>
<div class="ab" style="left:409.90px;top:250.18px;width:37.40px"></div>
<div class="ab" style="left:448.50px;top:250.18px;width:36.90px"></div>
<svg class="i" style="left:265.30px;top:250.30px" width="4.4" height="8" viewBox="0 0 4.4 8"><path d="M2.2 0.4L3.7 0.5L3.2 3.2L3.8 3.3L1.3 7.6L1.9 4.4L1.1 4.3Z" fill="#ffe030" stroke="#f0a818" stroke-width="0.4" stroke-linejoin="round"/></svg>
<svg class="i" style="left:265.30px;top:258.54px" width="4.4" height="8" viewBox="0 0 4.4 8"><path d="M2.2 0.4L3.7 0.5L3.2 3.2L3.8 3.3L1.3 7.6L1.9 4.4L1.1 4.3Z" fill="#ffe030" stroke="#f0a818" stroke-width="0.4" stroke-linejoin="round"/></svg>
<div class="ab" style="left:271.40px;top:266.66px;width:97.80px"></div>
<div class="ab" style="left:370.40px;top:266.66px;width:38.30px"></div>
<div class="ab" style="left:409.90px;top:266.66px;width:37.40px"></div>
<div class="ab" style="left:448.50px;top:266.66px;width:36.90px"></div>
<svg class="i" style="left:265.30px;top:266.78px" width="4.4" height="8" viewBox="0 0 4.4 8"><path d="M2.2 0.4L3.7 0.5L3.2 3.2L3.8 3.3L1.3 7.6L1.9 4.4L1.1 4.3Z" fill="#ffe030" stroke="#f0a818" stroke-width="0.4" stroke-linejoin="round"/></svg>
<svg class="i" style="left:256.50px;top:276.07px" width="6.4" height="6.4" viewBox="0 0 6.4 6.4"><circle cx="3.2" cy="3.2" r="2.55" fill="#f2f2f2" stroke="#5e5e5e" stroke-width="0.85"/><path d="M1.9 3.2H4.4" stroke="#777" stroke-width="0.7"/></svg>
<div class="ab" style="left:263.40px;top:283.14px;width:105.80px"></div>
<div class="ab" style="left:370.40px;top:283.14px;width:38.30px"></div>
<div class="ab" style="left:409.90px;top:283.14px;width:37.40px"></div>
<div class="ab" style="left:448.50px;top:283.14px;width:36.90px"></div>
<svg class="i" style="left:256.50px;top:284.31px" width="6.4" height="6.4" viewBox="0 0 6.4 6.4"><circle cx="3.2" cy="3.2" r="2.55" fill="#f2f2f2" stroke="#5e5e5e" stroke-width="0.85"/><path d="M1.9 3.2H4.4" stroke="#777" stroke-width="0.7"/></svg>
<svg class="i" style="left:256.50px;top:292.55px" width="6.4" height="6.4" viewBox="0 0 6.4 6.4"><circle cx="3.2" cy="3.2" r="2.55" fill="#f2f2f2" stroke="#5e5e5e" stroke-width="0.85"/><path d="M1.9 3.2H4.4" stroke="#777" stroke-width="0.7"/></svg>
<div class="ab" style="left:263.40px;top:299.62px;width:105.80px"></div>
<div class="ab" style="left:370.40px;top:299.62px;width:38.30px"></div>
<div class="ab" style="left:409.90px;top:299.62px;width:37.40px"></div>
<div class="ab" style="left:448.50px;top:299.62px;width:36.90px"></div>
<svg class="i" style="left:256.50px;top:300.79px" width="6.4" height="6.4" viewBox="0 0 6.4 6.4"><circle cx="3.2" cy="3.2" r="2.55" fill="#f2f2f2" stroke="#5e5e5e" stroke-width="0.85"/><path d="M1.9 3.2H4.4" stroke="#777" stroke-width="0.7"/></svg>
<svg class="i" style="left:256.50px;top:309.03px" width="6.4" height="6.4" viewBox="0 0 6.4 6.4"><circle cx="3.2" cy="3.2" r="2.55" fill="#f2f2f2" stroke="#5e5e5e" stroke-width="0.85"/><path d="M1.9 3.2H4.4" stroke="#777" stroke-width="0.7"/></svg>
<div class="ab" style="left:263.40px;top:316.10px;width:105.80px"></div>
<div class="ab" style="left:370.40px;top:316.10px;width:38.30px"></div>
<div class="ab" style="left:409.90px;top:316.10px;width:37.40px"></div>
<div class="ab" style="left:448.50px;top:316.10px;width:36.90px"></div>
<svg class="i" style="left:256.50px;top:317.27px" width="6.4" height="6.4" viewBox="0 0 6.4 6.4"><circle cx="3.2" cy="3.2" r="2.55" fill="#f2f2f2" stroke="#5e5e5e" stroke-width="0.85"/><path d="M1.9 3.2H4.4" stroke="#777" stroke-width="0.7"/></svg>
<svg class="i" style="left:256.50px;top:325.51px" width="6.4" height="6.4" viewBox="0 0 6.4 6.4"><circle cx="3.2" cy="3.2" r="2.55" fill="#f2f2f2" stroke="#5e5e5e" stroke-width="0.85"/><path d="M1.9 3.2H4.4" stroke="#777" stroke-width="0.7"/></svg>
<div class="ab" style="left:263.40px;top:332.58px;width:105.80px"></div>
<div class="ab" style="left:370.40px;top:332.58px;width:38.30px"></div>
<div class="ab" style="left:409.90px;top:332.58px;width:37.40px"></div>
<div class="ab" style="left:448.50px;top:332.58px;width:36.90px"></div>
<svg class="i" style="left:256.50px;top:333.75px" width="6.4" height="6.4" viewBox="0 0 6.4 6.4"><circle cx="3.2" cy="3.2" r="2.55" fill="#f2f2f2" stroke="#5e5e5e" stroke-width="0.85"/><path d="M1.9 3.2H4.4" stroke="#777" stroke-width="0.7"/></svg>
<svg class="i" style="left:256.50px;top:341.99px" width="6.4" height="6.4" viewBox="0 0 6.4 6.4"><circle cx="3.2" cy="3.2" r="2.55" fill="#f2f2f2" stroke="#5e5e5e" stroke-width="0.85"/><path d="M1.9 3.2H4.4" stroke="#777" stroke-width="0.7"/></svg>
<div class="ab" style="left:271.40px;top:349.06px;width:97.80px"></div>
<div class="ab" style="left:370.40px;top:349.06px;width:38.30px"></div>
<div class="ab" style="left:409.90px;top:349.06px;width:37.40px"></div>
<div class="ab" style="left:448.50px;top:349.06px;width:36.90px"></div>
<svg class="i" style="left:256.50px;top:350.68px" width="4" height="5" viewBox="0 0 4 5"><path d="M0.9 0.5L3.0 2.5L0.9 4.5" fill="none" stroke="#3a3a3a" stroke-width="1.0"/></svg>
<svg class="i" style="left:264.30px;top:350.23px" width="6.4" height="6.4" viewBox="0 0 6.4 6.4"><circle cx="3.2" cy="3.2" r="2.55" fill="#f2f2f2" stroke="#5e5e5e" stroke-width="0.85"/><path d="M1.9 3.2H4.4" stroke="#777" stroke-width="0.7"/></svg>
<svg class="i" style="left:256.50px;top:358.47px" width="6.4" height="6.4" viewBox="0 0 6.4 6.4"><circle cx="3.2" cy="3.2" r="2.55" fill="#f2f2f2" stroke="#5e5e5e" stroke-width="0.85"/><path d="M1.9 3.2H4.4" stroke="#777" stroke-width="0.7"/></svg>
<div class="ab" style="left:263.40px;top:365.54px;width:105.80px"></div>
<div class="ab" style="left:370.40px;top:365.54px;width:38.30px"></div>
<div class="ab" style="left:409.90px;top:365.54px;width:37.40px"></div>
<div class="ab" style="left:448.50px;top:365.54px;width:36.90px"></div>
<svg class="i" style="left:256.50px;top:366.71px" width="6.4" height="6.4" viewBox="0 0 6.4 6.4"><circle cx="3.2" cy="3.2" r="2.55" fill="#f2f2f2" stroke="#5e5e5e" stroke-width="0.85"/><path d="M1.9 3.2H4.4" stroke="#777" stroke-width="0.7"/></svg>
<svg class="i" style="left:256.50px;top:374.95px" width="6.4" height="6.4" viewBox="0 0 6.4 6.4"><circle cx="3.2" cy="3.2" r="2.55" fill="#f2f2f2" stroke="#5e5e5e" stroke-width="0.85"/><path d="M1.9 3.2H4.4" stroke="#777" stroke-width="0.7"/></svg>
<div class="ab" style="left:263.40px;top:382.02px;width:105.80px"></div>
<div class="ab" style="left:370.40px;top:382.02px;width:38.30px"></div>
<div class="ab" style="left:409.90px;top:382.02px;width:37.40px"></div>
<div class="ab" style="left:448.50px;top:382.02px;width:36.90px"></div>
<svg class="i" style="left:256.50px;top:383.19px" width="6.4" height="6.4" viewBox="0 0 6.4 6.4"><circle cx="3.2" cy="3.2" r="2.55" fill="#f2f2f2" stroke="#5e5e5e" stroke-width="0.85"/><path d="M1.9 3.2H4.4" stroke="#777" stroke-width="0.7"/></svg>
<svg class="i" style="left:256.50px;top:391.43px" width="6.4" height="6.4" viewBox="0 0 6.4 6.4"><circle cx="3.2" cy="3.2" r="2.55" fill="#f2f2f2" stroke="#5e5e5e" stroke-width="0.85"/><path d="M1.9 3.2H4.4" stroke="#777" stroke-width="0.7"/></svg>
<div class="ab" style="left:263.40px;top:398.50px;width:105.80px"></div>
<div class="ab" style="left:370.40px;top:398.50px;width:38.30px"></div>
<div class="ab" style="left:409.90px;top:398.50px;width:37.40px"></div>
<div class="ab" style="left:448.50px;top:398.50px;width:36.90px"></div>
<svg class="i" style="left:264.30px;top:407.91px" width="6.4" height="6.4" viewBox="0 0 6.4 6.4"><circle cx="3.2" cy="3.2" r="2.55" fill="#f2f2f2" stroke="#5e5e5e" stroke-width="0.85"/><path d="M1.9 3.2H4.4" stroke="#777" stroke-width="0.7"/></svg>
<div class="tb" style="left:2.20px;top:497.2px;width:18.40px;height:14.6px"></div>
<div class="tb" style="left:23.40px;top:497.2px;width:18.20px;height:14.6px"></div>
<div class="tb" style="left:317.40px;top:497.2px;width:18.50px;height:14.6px"></div>
<div class="tb" style="left:341.80px;top:497.2px;width:19.20px;height:14.6px"></div>
<div class="tb" style="left:396.00px;top:497.2px;width:18.20px;height:14.6px"></div>
<div class="tb" style="left:418.40px;top:497.2px;width:18.20px;height:14.6px"></div>
<div class="tb" style="left:440.60px;top:497.2px;width:18.40px;height:14.6px"></div>
<div class="tb" style="left:463.20px;top:497.2px;width:18.40px;height:14.6px"></div>
<svg class="i" style="left:0;top:495px" width="490" height="20" viewBox="0 495 490 20"><path d="M10.40 503.60h-3.3v-2.0l-3.4 3.6l3.4 3.6v-2.0h3.3zM12.00 503.60h3.3v-2.0l3.4 3.6l-3.4 3.6v-2.0h-3.3zM25.10 503.60h3.3v-2.0l3.4 3.6l-3.4 3.6v-2.0h-3.3zM39.30 503.60h-3.3v-2.0l-3.4 3.6l3.4 3.6v-2.0h3.3z" fill="#2e8ee0"/><rect x="322.2" y="498" width="10.8" height="9" rx="0.5" fill="#1c4cb4"/><rect x="327" y="498.8" width="5.4" height="5.2" fill="#5aa2f0"/><rect x="325" y="507" width="6.6" height="2.4" fill="#c4c8d0"/><circle cx="322.8" cy="504.9" r="3.3" fill="#a8c8f0" stroke="#8090b0" stroke-width="0.8"/><path d="M325.2 507.6L328.4 511.4" stroke="#805840" stroke-width="1.3"/><rect x="343.8" y="498.6" width="8.4" height="6" rx="0.4" fill="#2880e0"/><rect x="346.6" y="504.6" width="3" height="1.2" fill="#707880"/><rect x="350.8" y="503.6" width="8.4" height="6" rx="0.4" fill="#2880e0"/><rect x="353.6" y="509.6" width="3" height="1.2" fill="#707880"/><path d="M352.2 500.6H356.6V503.4" stroke="#8890a0" stroke-width="0.6" fill="none"/><circle cx="405.3" cy="504.8" r="7.3" fill="#fbfbfb" stroke="#585858" stroke-width="1.0"/><path d="M405.3 499.4V505H409.6" stroke="#282828" stroke-width="1.1" fill="none"/><circle cx="405.3" cy="504.8" r="5.9" fill="none" stroke="#707070" stroke-width="1.0" stroke-dasharray="0.5 2.59"/><rect x="422.8" y="498.6" width="8.4" height="12.2" fill="#efefef" stroke="#d4d4d4" stroke-width="0.5"/><path d="M424.4 501h5.2M424.4 502.8h5.2M424.4 504.6h3.4" stroke="#d0d0d0" stroke-width="0.5"/><path d="M431.9 505.8v6.4M428.7 509h6.4" stroke="#9cd058" stroke-width="2.1"/><circle cx="450" cy="505" r="4.6" fill="none" stroke="#b4b8bc" stroke-width="2.8"/><circle cx="450" cy="505" r="6.6" fill="none" stroke="#b4b8bc" stroke-width="1.8" stroke-dasharray="2.6 2.58"/><path d="M468.3 500.8L476.9 509.6M476.9 500.8L468.3 509.6" stroke="#3a90de" stroke-width="3.0"/></svg>
<div class="gw" style="left:489.30px;top:1.20px;width:289.30px;height:63.90px"></div>
<svg class="i" style="left:493.50px;top:4.10px" width="7.4" height="7.8" viewBox="0 0 7.4 7.8"><defs><linearGradient id="fg1" x1="0" y1="0" x2="0" y2="1"><stop offset="0" stop-color="#5aa8f0"/><stop offset="1" stop-color="#174a90"/></linearGradient></defs><rect x="0.2" y="0.2" width="7" height="7.4" rx="1.1" fill="#0c0e12"/><path d="M1.3 0.2H6.1A1.1 1.1 0 0 1 7.2 1.3V4.6H0.2V1.3A1.1 1.1 0 0 1 1.3 0.2Z" fill="url(#fg1)"/><path d="M2.2 0.9V3.0M3.3 0.9V2.2M4.6 1.0H5.6" stroke="#e8f2fc" stroke-width="0.55" fill="none"/><rect x="1.9" y="5.5" width="1.3" height="1.5" fill="#b8bcc4"/><rect x="3.9" y="5.5" width="1.5" height="1.5" fill="#9ca0a8"/></svg>
<svg class="i" style="left:769.2px;top:4.60px" width="5" height="5" viewBox="0 0 5 5"><path d="M0.6 0.6L4.4 4.4M4.4 0.6L0.6 4.4" stroke="#9a9a9a" stroke-width="0.6"/></svg>
<svg class="i" style="left:490.30px;top:15.90px" width="250.90" height="49.00" viewBox="490.30 15.90 250.90 49.00"><rect x="490.30" y="15.90" width="250.90" height="49.00" fill="#e2f3fc"/><path d="M500.50 15.90V64.90M510.22 15.90V64.90M519.94 15.90V64.90M529.66 15.90V64.90M539.38 15.90V64.90M549.10 15.90V64.90M558.82 15.90V64.90M568.54 15.90V64.90M578.26 15.90V64.90M587.98 15.90V64.90M597.70 15.90V64.90M607.42 15.90V64.90M617.14 15.90V64.90M626.86 15.90V64.90M636.58 15.90V64.90M646.30 15.90V64.90M656.02 15.90V64.90M665.74 15.90V64.90M675.46 15.90V64.90M685.18 15.90V64.90M694.90 15.90V64.90M704.62 15.90V64.90M714.34 15.90V64.90M724.06 15.90V64.90M733.78 15.90V64.90M490.30 55.48H741.20M490.30 45.76H741.20M490.30 36.04H741.20M490.30 26.32H741.20M490.30 16.60H741.20" stroke="#aec8e8" stroke-width="0.72" opacity="1.00" fill="none"/><path d="M490.30 64.90 L490.30 45.00 L491.60 53.00 L493.00 52.60 L494.60 49.20 L496.50 51.00 L499.00 51.50 L501.40 50.50 L502.10 50.50 L502.40 20.20 L591.00 20.20 L591.50 20.93 L595.33 21.56 L597.75 21.30 L600.62 21.45 L602.50 21.10 L603.10 23.50 L603.90 23.50 L604.50 21.10 L606.19 21.64 L609.02 21.56 L610.83 21.25 L614.36 21.03 L618.43 21.70 L620.30 20.83 L623.40 21.74 L626.12 21.02 L628.93 20.83 L631.26 21.24 L634.25 21.03 L636.61 21.02 L639.51 21.09 L641.36 21.64 L644.50 21.44 L646.74 21.79 L647.00 21.10 L647.60 23.00 L648.40 23.00 L649.00 21.10 L650.61 20.92 L653.21 21.52 L656.71 21.74 L659.53 21.63 L662.93 21.10 L666.14 21.68 L669.98 21.31 L673.19 20.83 L675.57 21.60 L678.37 20.97 L681.48 21.50 L683.60 21.10 L684.20 24.00 L685.00 24.00 L685.60 21.10 L687.75 21.31 L691.42 21.32 L694.17 21.29 L696.04 20.84 L699.53 21.78 L702.75 21.19 L704.96 21.30 L706.50 21.10 L707.10 24.80 L707.90 24.80 L708.50 21.10 L709.12 21.57 L712.21 21.66 L714.57 21.31 L718.65 21.38 L721.56 21.07 L724.67 21.76 L726.48 21.58 L730.25 21.69 L733.83 21.61 L736.88 21.36 L739.70 20.86 L741.20 21.10 L741.20 64.90 Z" fill="#92fa92"/><g clip-path="url(#c1)"><path d="M500.50 15.90V64.90M510.22 15.90V64.90M519.94 15.90V64.90M529.66 15.90V64.90M539.38 15.90V64.90M549.10 15.90V64.90M558.82 15.90V64.90M568.54 15.90V64.90M578.26 15.90V64.90M587.98 15.90V64.90M597.70 15.90V64.90M607.42 15.90V64.90M617.14 15.90V64.90M626.86 15.90V64.90M636.58 15.90V64.90M646.30 15.90V64.90M656.02 15.90V64.90M665.74 15.90V64.90M675.46 15.90V64.90M685.18 15.90V64.90M694.90 15.90V64.90M704.62 15.90V64.90M714.34 15.90V64.90M724.06 15.90V64.90M733.78 15.90V64.90M490.30 55.48H741.20M490.30 45.76H741.20M490.30 36.04H741.20M490.30 26.32H741.20M490.30 16.60H741.20" stroke="#b8ccf0" stroke-width="0.72" opacity="0.70" fill="none"/></g><clipPath id="c1"><path d="M490.30 64.90 L490.30 45.00 L491.60 53.00 L493.00 52.60 L494.60 49.20 L496.50 51.00 L499.00 51.50 L501.40 50.50 L502.10 50.50 L502.40 20.20 L591.00 20.20 L591.50 20.93 L595.33 21.56 L597.75 21.30 L600.62 21.45 L602.50 21.10 L603.10 23.50 L603.90 23.50 L604.50 21.10 L606.19 21.64 L609.02 21.56 L610.83 21.25 L614.36 21.03 L618.43 21.70 L620.30 20.83 L623.40 21.74 L626.12 21.02 L628.93 20.83 L631.26 21.24 L634.25 21.03 L636.61 21.02 L639.51 21.09 L641.36 21.64 L644.50 21.44 L646.74 21.79 L647.00 21.10 L647.60 23.00 L648.40 23.00 L649.00 21.10 L650.61 20.92 L653.21 21.52 L656.71 21.74 L659.53 21.63 L662.93 21.10 L666.14 21.68 L669.98 21.31 L673.19 20.83 L675.57 21.60 L678.37 20.97 L681.48 21.50 L683.60 21.10 L684.20 24.00 L685.00 24.00 L685.60 21.10 L687.75 21.31 L691.42 21.32 L694.17 21.29 L696.04 20.84 L699.53 21.78 L702.75 21.19 L704.96 21.30 L706.50 21.10 L707.10 24.80 L707.90 24.80 L708.50 21.10 L709.12 21.57 L712.21 21.66 L714.57 21.31 L718.65 21.38 L721.56 21.07 L724.67 21.76 L726.48 21.58 L730.25 21.69 L733.83 21.61 L736.88 21.36 L739.70 20.86 L741.20 21.10 L741.20 64.90 Z"/></clipPath><path d="M490.30 45.00 L491.60 53.00 L493.00 52.60 L494.60 49.20 L496.50 51.00 L499.00 51.50 L501.40 50.50 L502.10 50.50 L502.40 20.20 L591.00 20.20 L591.50 20.93 L595.33 21.56 L597.75 21.30 L600.62 21.45 L602.50 21.10 L603.10 23.50 L603.90 23.50 L604.50 21.10 L606.19 21.64 L609.02 21.56 L610.83 21.25 L614.36 21.03 L618.43 21.70 L620.30 20.83 L623.40 21.74 L626.12 21.02 L628.93 20.83 L631.26 21.24 L634.25 21.03 L636.61 21.02 L639.51 21.09 L641.36 21.64 L644.50 21.44 L646.74 21.79 L647.00 21.10 L647.60 23.00 L648.40 23.00 L649.00 21.10 L650.61 20.92 L653.21 21.52 L656.71 21.74 L659.53 21.63 L662.93 21.10 L666.14 21.68 L669.98 21.31 L673.19 20.83 L675.57 21.60 L678.37 20.97 L681.48 21.50 L683.60 21.10 L684.20 24.00 L685.00 24.00 L685.60 21.10 L687.75 21.31 L691.42 21.32 L694.17 21.29 L696.04 20.84 L699.53 21.78 L702.75 21.19 L704.96 21.30 L706.50 21.10 L707.10 24.80 L707.90 24.80 L708.50 21.10 L709.12 21.57 L712.21 21.66 L714.57 21.31 L718.65 21.38 L721.56 21.07 L724.67 21.76 L726.48 21.58 L730.25 21.69 L733.83 21.61 L736.88 21.36 L739.70 20.86 L741.20 21.10" fill="none" stroke="#38ea38" stroke-width="0.8"/><path d="M490.60 15.90V64.90" stroke="#a8c8e4" stroke-width="0.7" fill="none"/><path d="M490.30 15.80H741.20" stroke="#a4a8ae" stroke-width="0.8" fill="none"/></svg>
<div class="sw" style="left:745.7px;top:18.90px;height:4.00px;background:#08f008"></div>
<div class="sw" style="left:756.6px;top:18.90px;height:4.00px;background:#dcecf6"></div>
<div class="sw" style="left:766.2px;top:18.90px;height:4.00px;background:#a8c0dc"></div>
<div class="vb" style="top:26.50px"></div>
<div class="ul" style="top:33.30px"></div>
<div class="bt" style="left:743.4px;top:43.00px;width:16.2px"></div>
<div class="bt" style="left:761.8px;top:43.00px;width:11.8px"></div>
<div class="gw" style="left:489.30px;top:70.40px;width:289.30px;height:67.00px"></div>
<div style="left:489.30px;top:70.40px;width:289.30px;height:14.70px;border-radius:1.6px 1.6px 0 0;background:linear-gradient(#d6d6d6 0%,#dcdcdc 55%,#eaeaea 70%,#efefef 100%)"></div>
<svg class="i" style="left:493.50px;top:73.30px" width="7.4" height="7.8" viewBox="0 0 7.4 7.8"><defs><linearGradient id="fg2" x1="0" y1="0" x2="0" y2="1"><stop offset="0" stop-color="#5aa8f0"/><stop offset="1" stop-color="#174a90"/></linearGradient></defs><rect x="0.2" y="0.2" width="7" height="7.4" rx="1.1" fill="#0c0e12"/><path d="M1.3 0.2H6.1A1.1 1.1 0 0 1 7.2 1.3V4.6H0.2V1.3A1.1 1.1 0 0 1 1.3 0.2Z" fill="url(#fg2)"/><path d="M2.2 0.9V3.0M3.3 0.9V2.2M4.6 1.0H5.6" stroke="#e8f2fc" stroke-width="0.55" fill="none"/><rect x="1.9" y="5.5" width="1.3" height="1.5" fill="#b8bcc4"/><rect x="3.9" y="5.5" width="1.5" height="1.5" fill="#9ca0a8"/></svg>
<svg class="i" style="left:769.2px;top:73.80px" width="5" height="5" viewBox="0 0 5 5"><path d="M0.6 0.6L4.4 4.4M4.4 0.6L0.6 4.4" stroke="#9a9a9a" stroke-width="0.6"/></svg>
<svg class="i" style="left:490.30px;top:85.10px" width="250.90" height="52.10" viewBox="490.30 85.10 250.90 52.10"><rect x="490.30" y="85.10" width="250.90" height="52.10" fill="#e2f3fc"/><path d="M498.70 85.10V137.20M508.42 85.10V137.20M518.14 85.10V137.20M527.86 85.10V137.20M537.58 85.10V137.20M547.30 85.10V137.20M557.02 85.10V137.20M566.74 85.10V137.20M576.46 85.10V137.20M586.18 85.10V137.20M595.90 85.10V137.20M605.62 85.10V137.20M615.34 85.10V137.20M625.06 85.10V137.20M634.78 85.10V137.20M644.50 85.10V137.20M654.22 85.10V137.20M663.94 85.10V137.20M673.66 85.10V137.20M683.38 85.10V137.20M693.10 85.10V137.20M702.82 85.10V137.20M712.54 85.10V137.20M722.26 85.10V137.20M731.98 85.10V137.20M490.30 127.78H741.20M490.30 118.06H741.20M490.30 108.34H741.20M490.30 98.62H741.20M490.30 88.90H741.20" stroke="#aec8e8" stroke-width="0.72" opacity="1.00" fill="none"/><path d="M490.30 137.20 L490.30 115.20 L502.10 115.20 L502.40 88.40 L591.00 88.40 L591.50 89.40 L592.00 89.73 L597.43 89.28 L600.10 89.67 L604.86 89.58 L608.25 89.55 L612.59 89.54 L615.49 89.47 L619.15 89.61 L623.70 89.40 L624.30 88.30 L625.10 88.30 L625.70 89.40 L628.88 89.47 L632.14 89.27 L634.62 89.48 L638.04 89.44 L643.30 89.51 L647.49 89.37 L648.70 89.40 L649.30 88.20 L650.10 88.20 L650.70 89.40 L652.80 89.51 L658.40 89.59 L661.38 89.70 L666.33 89.62 L667.00 89.40 L667.60 88.30 L668.40 88.30 L669.00 89.40 L671.63 89.63 L676.56 89.43 L678.70 89.40 L679.30 88.30 L680.10 88.30 L680.70 89.40 L682.10 89.73 L685.02 89.63 L689.70 89.48 L693.80 89.50 L699.16 89.50 L702.80 89.40 L703.40 95.40 L704.20 95.40 L704.80 89.40 L709.45 89.70 L713.32 89.53 L717.00 89.40 L717.60 88.40 L718.40 88.40 L719.00 89.40 L722.62 89.36 L726.06 89.60 L728.99 89.70 L732.25 89.71 L735.64 89.73 L740.30 89.50 L741.20 89.40 L741.20 137.20 Z" fill="#9efcfc"/><g clip-path="url(#c2)"><path d="M498.70 85.10V137.20M508.42 85.10V137.20M518.14 85.10V137.20M527.86 85.10V137.20M537.58 85.10V137.20M547.30 85.10V137.20M557.02 85.10V137.20M566.74 85.10V137.20M576.46 85.10V137.20M586.18 85.10V137.20M595.90 85.10V137.20M605.62 85.10V137.20M615.34 85.10V137.20M625.06 85.10V137.20M634.78 85.10V137.20M644.50 85.10V137.20M654.22 85.10V137.20M663.94 85.10V137.20M673.66 85.10V137.20M683.38 85.10V137.20M693.10 85.10V137.20M702.82 85.10V137.20M712.54 85.10V137.20M722.26 85.10V137.20M731.98 85.10V137.20M490.30 127.78H741.20M490.30 118.06H741.20M490.30 108.34H741.20M490.30 98.62H741.20M490.30 88.90H741.20" stroke="#b8ccf0" stroke-width="0.72" opacity="0.70" fill="none"/></g><clipPath id="c2"><path d="M490.30 137.20 L490.30 115.20 L502.10 115.20 L502.40 88.40 L591.00 88.40 L591.50 89.40 L592.00 89.73 L597.43 89.28 L600.10 89.67 L604.86 89.58 L608.25 89.55 L612.59 89.54 L615.49 89.47 L619.15 89.61 L623.70 89.40 L624.30 88.30 L625.10 88.30 L625.70 89.40 L628.88 89.47 L632.14 89.27 L634.62 89.48 L638.04 89.44 L643.30 89.51 L647.49 89.37 L648.70 89.40 L649.30 88.20 L650.10 88.20 L650.70 89.40 L652.80 89.51 L658.40 89.59 L661.38 89.70 L666.33 89.62 L667.00 89.40 L667.60 88.30 L668.40 88.30 L669.00 89.40 L671.63 89.63 L676.56 89.43 L678.70 89.40 L679.30 88.30 L680.10 88.30 L680.70 89.40 L682.10 89.73 L685.02 89.63 L689.70 89.48 L693.80 89.50 L699.16 89.50 L702.80 89.40 L703.40 95.40 L704.20 95.40 L704.80 89.40 L709.45 89.70 L713.32 89.53 L717.00 89.40 L717.60 88.40 L718.40 88.40 L719.00 89.40 L722.62 89.36 L726.06 89.60 L728.99 89.70 L732.25 89.71 L735.64 89.73 L740.30 89.50 L741.20 89.40 L741.20 137.20 Z"/></clipPath><path d="M490.30 115.20 L502.10 115.20 L502.40 88.40 L591.00 88.40 L591.50 89.40 L592.00 89.73 L597.43 89.28 L600.10 89.67 L604.86 89.58 L608.25 89.55 L612.59 89.54 L615.49 89.47 L619.15 89.61 L623.70 89.40 L624.30 88.30 L625.10 88.30 L625.70 89.40 L628.88 89.47 L632.14 89.27 L634.62 89.48 L638.04 89.44 L643.30 89.51 L647.49 89.37 L648.70 89.40 L649.30 88.20 L650.10 88.20 L650.70 89.40 L652.80 89.51 L658.40 89.59 L661.38 89.70 L666.33 89.62 L667.00 89.40 L667.60 88.30 L668.40 88.30 L669.00 89.40 L671.63 89.63 L676.56 89.43 L678.70 89.40 L679.30 88.30 L680.10 88.30 L680.70 89.40 L682.10 89.73 L685.02 89.63 L689.70 89.48 L693.80 89.50 L699.16 89.50 L702.80 89.40 L703.40 95.40 L704.20 95.40 L704.80 89.40 L709.45 89.70 L713.32 89.53 L717.00 89.40 L717.60 88.40 L718.40 88.40 L719.00 89.40 L722.62 89.36 L726.06 89.60 L728.99 89.70 L732.25 89.71 L735.64 89.73 L740.30 89.50 L741.20 89.40" fill="none" stroke="#30e4f4" stroke-width="0.8"/><path d="M490.60 85.10V137.20" stroke="#a8c8e4" stroke-width="0.7" fill="none"/><path d="M490.30 85.00H741.20" stroke="#a4a8ae" stroke-width="0.8" fill="none"/></svg>
<div class="ul" style="top:91.90px"></div>
<div class="sw" style="left:745.7px;top:92.70px;height:2.80px;background:#08e8f0"></div>
<div class="sw" style="left:756.6px;top:92.70px;height:2.80px;background:#dcecf6"></div>
<div class="sw" style="left:766.2px;top:92.70px;height:2.80px;background:#a8c0dc"></div>
<div class="vb" style="top:98.20px"></div>
<div class="ul" style="top:105.00px"></div>
<div class="bt" style="left:743.4px;top:115.10px;width:16.2px"></div>
<div class="bt" style="left:761.8px;top:115.10px;width:11.8px"></div>
<div class="gw" style="left:489.30px;top:142.50px;width:289.30px;height:68.30px"></div>
<div style="left:489.30px;top:142.50px;width:289.30px;height:14.70px;border-radius:1.6px 1.6px 0 0;background:linear-gradient(#d6d6d6 0%,#dcdcdc 55%,#eaeaea 70%,#efefef 100%)"></div>
<svg class="i" style="left:493.50px;top:145.40px" width="7.4" height="7.8" viewBox="0 0 7.4 7.8"><defs><linearGradient id="fg3" x1="0" y1="0" x2="0" y2="1"><stop offset="0" stop-color="#5aa8f0"/><stop offset="1" stop-color="#174a90"/></linearGradient></defs><rect x="0.2" y="0.2" width="7" height="7.4" rx="1.1" fill="#0c0e12"/><path d="M1.3 0.2H6.1A1.1 1.1 0 0 1 7.2 1.3V4.6H0.2V1.3A1.1 1.1 0 0 1 1.3 0.2Z" fill="url(#fg3)"/><path d="M2.2 0.9V3.0M3.3 0.9V2.2M4.6 1.0H5.6" stroke="#e8f2fc" stroke-width="0.55" fill="none"/><rect x="1.9" y="5.5" width="1.3" height="1.5" fill="#b8bcc4"/><rect x="3.9" y="5.5" width="1.5" height="1.5" fill="#9ca0a8"/></svg>
<svg class="i" style="left:769.2px;top:145.90px" width="5" height="5" viewBox="0 0 5 5"><path d="M0.6 0.6L4.4 4.4M4.4 0.6L0.6 4.4" stroke="#9a9a9a" stroke-width="0.6"/></svg>
<svg class="i" style="left:490.30px;top:157.20px" width="250.90" height="53.40" viewBox="490.30 157.20 250.90 53.40"><rect x="490.30" y="157.20" width="250.90" height="53.40" fill="#e2f3fc"/><path d="M497.20 157.20V210.60M506.92 157.20V210.60M516.64 157.20V210.60M526.36 157.20V210.60M536.08 157.20V210.60M545.80 157.20V210.60M555.52 157.20V210.60M565.24 157.20V210.60M574.96 157.20V210.60M584.68 157.20V210.60M594.40 157.20V210.60M604.12 157.20V210.60M613.84 157.20V210.60M623.56 157.20V210.60M633.28 157.20V210.60M643.00 157.20V210.60M652.72 157.20V210.60M662.44 157.20V210.60M672.16 157.20V210.60M681.88 157.20V210.60M691.60 157.20V210.60M701.32 157.20V210.60M711.04 157.20V210.60M720.76 157.20V210.60M730.48 157.20V210.60M740.20 157.20V210.60M490.30 201.18H741.20M490.30 191.46H741.20M490.30 181.74H741.20M490.30 172.02H741.20M490.30 162.30H741.20" stroke="#aec8e8" stroke-width="0.72" opacity="1.00" fill="none"/><path d="M490.30 210.60 L490.30 191.60 L498.50 191.60 L499.60 192.40 L501.90 191.40 L502.40 170.60 L502.80 169.66 L505.08 168.83 L507.46 168.52 L508.90 167.48 L511.69 167.34 L513.42 168.20 L515.57 167.92 L517.73 167.59 L519.31 167.53 L522.16 167.29 L524.79 167.40 L526.22 167.46 L528.58 166.79 L529.95 167.48 L532.11 167.20 L534.97 167.08 L537.91 166.55 L540.64 166.50 L543.61 166.95 L545.10 165.92 L546.80 166.93 L548.89 166.41 L550.74 166.18 L552.74 165.90 L555.09 166.11 L558.00 166.12 L560.96 166.21 L564.02 165.81 L565.63 165.97 L568.64 165.87 L570.97 165.49 L572.66 165.56 L574.99 164.72 L576.42 165.26 L579.48 163.84 L582.21 163.87 L583.80 163.50 L586.47 164.03 L587.87 163.64 L589.27 163.73 L591.17 166.19 L594.21 165.81 L597.29 165.57 L598.75 165.95 L600.12 165.42 L602.10 165.82 L602.70 167.80 L603.30 167.80 L603.90 165.82 L606.60 165.59 L609.61 166.35 L611.59 165.79 L613.83 166.03 L616.20 165.93 L618.61 166.43 L620.82 165.77 L623.41 165.52 L625.26 166.49 L627.50 165.94 L628.84 165.77 L631.18 165.26 L633.58 166.06 L635.01 166.06 L637.15 166.13 L639.09 166.17 L641.71 165.27 L643.13 166.11 L646.15 165.55 L648.27 165.98 L650.16 165.67 L652.03 165.67 L654.39 165.57 L656.38 166.17 L657.75 165.90 L660.36 165.55 L662.07 166.18 L663.10 165.78 L663.70 167.60 L664.30 167.60 L664.90 165.78 L665.90 166.03 L667.40 165.53 L669.30 166.19 L671.40 166.21 L673.01 165.52 L675.48 166.22 L677.59 165.35 L679.12 165.74 L680.78 166.09 L683.58 165.27 L685.39 166.07 L687.84 166.06 L689.76 165.17 L691.60 166.02 L693.39 165.43 L695.45 165.52 L697.49 166.16 L699.08 164.96 L702.06 166.06 L705.12 165.44 L708.11 166.04 L709.82 165.78 L712.62 165.63 L714.85 165.11 L715.10 165.37 L715.70 171.20 L716.30 171.20 L716.90 165.37 L718.21 165.45 L720.04 165.71 L721.43 165.81 L723.98 165.80 L726.87 165.73 L729.21 164.54 L731.84 164.71 L733.69 165.32 L735.60 165.07 L736.20 163.60 L736.80 163.60 L737.40 165.07 L738.91 165.18 L740.83 164.68 L741.20 165.00 L741.20 210.60 Z" fill="#fc9696"/><g clip-path="url(#c3)"><path d="M497.20 157.20V210.60M506.92 157.20V210.60M516.64 157.20V210.60M526.36 157.20V210.60M536.08 157.20V210.60M545.80 157.20V210.60M555.52 157.20V210.60M565.24 157.20V210.60M574.96 157.20V210.60M584.68 157.20V210.60M594.40 157.20V210.60M604.12 157.20V210.60M613.84 157.20V210.60M623.56 157.20V210.60M633.28 157.20V210.60M643.00 157.20V210.60M652.72 157.20V210.60M662.44 157.20V210.60M672.16 157.20V210.60M681.88 157.20V210.60M691.60 157.20V210.60M701.32 157.20V210.60M711.04 157.20V210.60M720.76 157.20V210.60M730.48 157.20V210.60M740.20 157.20V210.60M490.30 201.18H741.20M490.30 191.46H741.20M490.30 181.74H741.20M490.30 172.02H741.20M490.30 162.30H741.20" stroke="#b8ccf0" stroke-width="0.72" opacity="0.70" fill="none"/></g><clipPath id="c3"><path d="M490.30 210.60 L490.30 191.60 L498.50 191.60 L499.60 192.40 L501.90 191.40 L502.40 170.60 L502.80 169.66 L505.08 168.83 L507.46 168.52 L508.90 167.48 L511.69 167.34 L513.42 168.20 L515.57 167.92 L517.73 167.59 L519.31 167.53 L522.16 167.29 L524.79 167.40 L526.22 167.46 L528.58 166.79 L529.95 167.48 L532.11 167.20 L534.97 167.08 L537.91 166.55 L540.64 166.50 L543.61 166.95 L545.10 165.92 L546.80 166.93 L548.89 166.41 L550.74 166.18 L552.74 165.90 L555.09 166.11 L558.00 166.12 L560.96 166.21 L564.02 165.81 L565.63 165.97 L568.64 165.87 L570.97 165.49 L572.66 165.56 L574.99 164.72 L576.42 165.26 L579.48 163.84 L582.21 163.87 L583.80 163.50 L586.47 164.03 L587.87 163.64 L589.27 163.73 L591.17 166.19 L594.21 165.81 L597.29 165.57 L598.75 165.95 L600.12 165.42 L602.10 165.82 L602.70 167.80 L603.30 167.80 L603.90 165.82 L606.60 165.59 L609.61 166.35 L611.59 165.79 L613.83 166.03 L616.20 165.93 L618.61 166.43 L620.82 165.77 L623.41 165.52 L625.26 166.49 L627.50 165.94 L628.84 165.77 L631.18 165.26 L633.58 166.06 L635.01 166.06 L637.15 166.13 L639.09 166.17 L641.71 165.27 L643.13 166.11 L646.15 165.55 L648.27 165.98 L650.16 165.67 L652.03 165.67 L654.39 165.57 L656.38 166.17 L657.75 165.90 L660.36 165.55 L662.07 166.18 L663.10 165.78 L663.70 167.60 L664.30 167.60 L664.90 165.78 L665.90 166.03 L667.40 165.53 L669.30 166.19 L671.40 166.21 L673.01 165.52 L675.48 166.22 L677.59 165.35 L679.12 165.74 L680.78 166.09 L683.58 165.27 L685.39 166.07 L687.84 166.06 L689.76 165.17 L691.60 166.02 L693.39 165.43 L695.45 165.52 L697.49 166.16 L699.08 164.96 L702.06 166.06 L705.12 165.44 L708.11 166.04 L709.82 165.78 L712.62 165.63 L714.85 165.11 L715.10 165.37 L715.70 171.20 L716.30 171.20 L716.90 165.37 L718.21 165.45 L720.04 165.71 L721.43 165.81 L723.98 165.80 L726.87 165.73 L729.21 164.54 L731.84 164.71 L733.69 165.32 L735.60 165.07 L736.20 163.60 L736.80 163.60 L737.40 165.07 L738.91 165.18 L740.83 164.68 L741.20 165.00 L741.20 210.60 Z"/></clipPath><path d="M490.30 191.60 L498.50 191.60 L499.60 192.40 L501.90 191.40 L502.40 170.60 L502.80 169.66 L505.08 168.83 L507.46 168.52 L508.90 167.48 L511.69 167.34 L513.42 168.20 L515.57 167.92 L517.73 167.59 L519.31 167.53 L522.16 167.29 L524.79 167.40 L526.22 167.46 L528.58 166.79 L529.95 167.48 L532.11 167.20 L534.97 167.08 L537.91 166.55 L540.64 166.50 L543.61 166.95 L545.10 165.92 L546.80 166.93 L548.89 166.41 L550.74 166.18 L552.74 165.90 L555.09 166.11 L558.00 166.12 L560.96 166.21 L564.02 165.81 L565.63 165.97 L568.64 165.87 L570.97 165.49 L572.66 165.56 L574.99 164.72 L576.42 165.26 L579.48 163.84 L582.21 163.87 L583.80 163.50 L586.47 164.03 L587.87 163.64 L589.27 163.73 L591.17 166.19 L594.21 165.81 L597.29 165.57 L598.75 165.95 L600.12 165.42 L602.10 165.82 L602.70 167.80 L603.30 167.80 L603.90 165.82 L606.60 165.59 L609.61 166.35 L611.59 165.79 L613.83 166.03 L616.20 165.93 L618.61 166.43 L620.82 165.77 L623.41 165.52 L625.26 166.49 L627.50 165.94 L628.84 165.77 L631.18 165.26 L633.58 166.06 L635.01 166.06 L637.15 166.13 L639.09 166.17 L641.71 165.27 L643.13 166.11 L646.15 165.55 L648.27 165.98 L650.16 165.67 L652.03 165.67 L654.39 165.57 L656.38 166.17 L657.75 165.90 L660.36 165.55 L662.07 166.18 L663.10 165.78 L663.70 167.60 L664.30 167.60 L664.90 165.78 L665.90 166.03 L667.40 165.53 L669.30 166.19 L671.40 166.21 L673.01 165.52 L675.48 166.22 L677.59 165.35 L679.12 165.74 L680.78 166.09 L683.58 165.27 L685.39 166.07 L687.84 166.06 L689.76 165.17 L691.60 166.02 L693.39 165.43 L695.45 165.52 L697.49 166.16 L699.08 164.96 L702.06 166.06 L705.12 165.44 L708.11 166.04 L709.82 165.78 L712.62 165.63 L714.85 165.11 L715.10 165.37 L715.70 171.20 L716.30 171.20 L716.90 165.37 L718.21 165.45 L720.04 165.71 L721.43 165.81 L723.98 165.80 L726.87 165.73 L729.21 164.54 L731.84 164.71 L733.69 165.32 L735.60 165.07 L736.20 163.60 L736.80 163.60 L737.40 165.07 L738.91 165.18 L740.83 164.68 L741.20 165.00" fill="none" stroke="#f04444" stroke-width="0.8"/><path d="M490.60 157.20V210.60" stroke="#a8c8e4" stroke-width="0.7" fill="none"/><path d="M490.30 157.10H741.20" stroke="#a4a8ae" stroke-width="0.8" fill="none"/></svg>
<div class="ul" style="top:164.40px"></div>
<div class="sw" style="left:745.7px;top:164.80px;height:4.00px;background:#f00808"></div>
<div class="sw" style="left:756.6px;top:164.80px;height:4.00px;background:#dcecf6"></div>
<div class="sw" style="left:766.2px;top:164.80px;height:4.00px;background:#a8c0dc"></div>
<div class="vb" style="top:172.40px"></div>
<div class="ul" style="top:179.20px"></div>
<div class="bt" style="left:743.4px;top:189.20px;width:16.2px"></div>
<div class="bt" style="left:761.8px;top:189.20px;width:11.8px"></div>
<div class="gw" style="left:489.30px;top:215.90px;width:289.30px;height:69.10px"></div>
<div style="left:489.30px;top:215.90px;width:289.30px;height:14.60px;border-radius:1.6px 1.6px 0 0;background:linear-gradient(#d6d6d6 0%,#dcdcdc 55%,#eaeaea 70%,#efefef 100%)"></div>
<svg class="i" style="left:493.50px;top:218.80px" width="7.4" height="7.8" viewBox="0 0 7.4 7.8"><defs><linearGradient id="fg4" x1="0" y1="0" x2="0" y2="1"><stop offset="0" stop-color="#5aa8f0"/><stop offset="1" stop-color="#174a90"/></linearGradient></defs><rect x="0.2" y="0.2" width="7" height="7.4" rx="1.1" fill="#0c0e12"/><path d="M1.3 0.2H6.1A1.1 1.1 0 0 1 7.2 1.3V4.6H0.2V1.3A1.1 1.1 0 0 1 1.3 0.2Z" fill="url(#fg4)"/><path d="M2.2 0.9V3.0M3.3 0.9V2.2M4.6 1.0H5.6" stroke="#e8f2fc" stroke-width="0.55" fill="none"/><rect x="1.9" y="5.5" width="1.3" height="1.5" fill="#b8bcc4"/><rect x="3.9" y="5.5" width="1.5" height="1.5" fill="#9ca0a8"/></svg>
<svg class="i" style="left:769.2px;top:219.20px" width="5" height="5" viewBox="0 0 5 5"><path d="M0.6 0.6L4.4 4.4M4.4 0.6L0.6 4.4" stroke="#9a9a9a" stroke-width="0.6"/></svg>
<svg class="i" style="left:490.30px;top:230.50px" width="250.90" height="54.30" viewBox="490.30 230.50 250.90 54.30"><rect x="490.30" y="230.50" width="250.90" height="54.30" fill="#e2f3fc"/><path d="M495.40 230.50V284.80M505.12 230.50V284.80M514.84 230.50V284.80M524.56 230.50V284.80M534.28 230.50V284.80M544.00 230.50V284.80M553.72 230.50V284.80M563.44 230.50V284.80M573.16 230.50V284.80M582.88 230.50V284.80M592.60 230.50V284.80M602.32 230.50V284.80M612.04 230.50V284.80M621.76 230.50V284.80M631.48 230.50V284.80M641.20 230.50V284.80M650.92 230.50V284.80M660.64 230.50V284.80M670.36 230.50V284.80M680.08 230.50V284.80M689.80 230.50V284.80M699.52 230.50V284.80M709.24 230.50V284.80M718.96 230.50V284.80M728.68 230.50V284.80M738.40 230.50V284.80M490.30 275.38H741.20M490.30 265.66H741.20M490.30 255.94H741.20M490.30 246.22H741.20M490.30 236.50H741.20" stroke="#aec8e8" stroke-width="0.72" opacity="1.00" fill="none"/><path d="M490.30 284.80 L490.30 283.60 L494.00 283.60 L494.30 278.20 L495.00 278.20 L495.30 283.60 L502.00 283.60 L502.40 240.00 L503.00 239.40 L565.00 239.40 L568.00 238.50 L590.00 238.50 L592.50 239.60 L594.00 241.30 L595.00 241.46 L598.58 241.55 L602.64 241.52 L606.66 241.16 L609.57 241.62 L612.93 241.60 L615.00 241.38 L617.39 241.42 L620.57 241.16 L622.89 241.29 L626.89 241.53 L629.07 241.55 L631.21 241.46 L633.31 241.15 L637.20 241.25 L639.52 241.64 L643.41 241.29 L647.52 241.42 L650.95 241.25 L655.01 241.50 L659.13 241.60 L661.64 241.33 L663.84 241.22 L665.80 241.30 L669.05 241.15 L672.47 241.32 L675.02 241.56 L677.97 241.31 L680.92 241.50 L682.86 241.64 L684.72 241.52 L688.54 241.16 L692.23 241.33 L695.42 241.15 L697.34 241.24 L701.43 241.25 L705.04 241.61 L709.10 241.32 L711.75 241.41 L715.42 241.20 L719.01 241.55 L722.87 241.17 L726.94 241.20 L729.56 241.46 L733.57 241.32 L737.58 241.42 L740.13 241.31 L741.20 241.30 L741.20 284.80 Z" fill="#98b0f2"/><g clip-path="url(#c4)"><path d="M495.40 230.50V284.80M505.12 230.50V284.80M514.84 230.50V284.80M524.56 230.50V284.80M534.28 230.50V284.80M544.00 230.50V284.80M553.72 230.50V284.80M563.44 230.50V284.80M573.16 230.50V284.80M582.88 230.50V284.80M592.60 230.50V284.80M602.32 230.50V284.80M612.04 230.50V284.80M621.76 230.50V284.80M631.48 230.50V284.80M641.20 230.50V284.80M650.92 230.50V284.80M660.64 230.50V284.80M670.36 230.50V284.80M680.08 230.50V284.80M689.80 230.50V284.80M699.52 230.50V284.80M709.24 230.50V284.80M718.96 230.50V284.80M728.68 230.50V284.80M738.40 230.50V284.80M490.30 275.38H741.20M490.30 265.66H741.20M490.30 255.94H741.20M490.30 246.22H741.20M490.30 236.50H741.20" stroke="#b8ccf0" stroke-width="0.72" opacity="0.35" fill="none"/></g><clipPath id="c4"><path d="M490.30 284.80 L490.30 283.60 L494.00 283.60 L494.30 278.20 L495.00 278.20 L495.30 283.60 L502.00 283.60 L502.40 240.00 L503.00 239.40 L565.00 239.40 L568.00 238.50 L590.00 238.50 L592.50 239.60 L594.00 241.30 L595.00 241.46 L598.58 241.55 L602.64 241.52 L606.66 241.16 L609.57 241.62 L612.93 241.60 L615.00 241.38 L617.39 241.42 L620.57 241.16 L622.89 241.29 L626.89 241.53 L629.07 241.55 L631.21 241.46 L633.31 241.15 L637.20 241.25 L639.52 241.64 L643.41 241.29 L647.52 241.42 L650.95 241.25 L655.01 241.50 L659.13 241.60 L661.64 241.33 L663.84 241.22 L665.80 241.30 L669.05 241.15 L672.47 241.32 L675.02 241.56 L677.97 241.31 L680.92 241.50 L682.86 241.64 L684.72 241.52 L688.54 241.16 L692.23 241.33 L695.42 241.15 L697.34 241.24 L701.43 241.25 L705.04 241.61 L709.10 241.32 L711.75 241.41 L715.42 241.20 L719.01 241.55 L722.87 241.17 L726.94 241.20 L729.56 241.46 L733.57 241.32 L737.58 241.42 L740.13 241.31 L741.20 241.30 L741.20 284.80 Z"/></clipPath><path d="M490.30 283.60 L494.00 283.60 L494.30 278.20 L495.00 278.20 L495.30 283.60 L502.00 283.60 L502.40 240.00 L503.00 239.40 L565.00 239.40 L568.00 238.50 L590.00 238.50 L592.50 239.60 L594.00 241.30 L595.00 241.46 L598.58 241.55 L602.64 241.52 L606.66 241.16 L609.57 241.62 L612.93 241.60 L615.00 241.38 L617.39 241.42 L620.57 241.16 L622.89 241.29 L626.89 241.53 L629.07 241.55 L631.21 241.46 L633.31 241.15 L637.20 241.25 L639.52 241.64 L643.41 241.29 L647.52 241.42 L650.95 241.25 L655.01 241.50 L659.13 241.60 L661.64 241.33 L663.84 241.22 L665.80 241.30 L669.05 241.15 L672.47 241.32 L675.02 241.56 L677.97 241.31 L680.92 241.50 L682.86 241.64 L684.72 241.52 L688.54 241.16 L692.23 241.33 L695.42 241.15 L697.34 241.24 L701.43 241.25 L705.04 241.61 L709.10 241.32 L711.75 241.41 L715.42 241.20 L719.01 241.55 L722.87 241.17 L726.94 241.20 L729.56 241.46 L733.57 241.32 L737.58 241.42 L740.13 241.31 L741.20 241.30" fill="none" stroke="#2e8cc0" stroke-width="0.8"/><path d="M490.60 230.50V284.80" stroke="#a8c8e4" stroke-width="0.7" fill="none"/><path d="M490.30 230.40H741.20" stroke="#a4a8ae" stroke-width="0.8" fill="none"/></svg>
<div class="ul" style="top:237.90px"></div>
<div class="sw" style="left:745.7px;top:239.10px;height:4.00px;background:#1878c0"></div>
<div class="sw" style="left:756.6px;top:239.10px;height:4.00px;background:#dcecf6"></div>
<div class="sw" style="left:766.2px;top:239.10px;height:4.00px;background:#a8c0dc"></div>
<div class="vb" style="top:246.20px"></div>
<div class="ul" style="top:253.00px"></div>
<div class="bt" style="left:743.4px;top:263.10px;width:16.2px"></div>
<div class="bt" style="left:761.8px;top:263.10px;width:11.8px"></div>
<div class="gw" style="left:489.30px;top:290.40px;width:289.30px;height:77.40px"></div>
<div style="left:489.30px;top:290.40px;width:289.30px;height:14.40px;border-radius:1.6px 1.6px 0 0;background:linear-gradient(#d6d6d6 0%,#dcdcdc 55%,#eaeaea 70%,#efefef 100%)"></div>
<svg class="i" style="left:493.50px;top:293.30px" width="7.4" height="7.8" viewBox="0 0 7.4 7.8"><defs><linearGradient id="fg5" x1="0" y1="0" x2="0" y2="1"><stop offset="0" stop-color="#5aa8f0"/><stop offset="1" stop-color="#174a90"/></linearGradient></defs><rect x="0.2" y="0.2" width="7" height="7.4" rx="1.1" fill="#0c0e12"/><path d="M1.3 0.2H6.1A1.1 1.1 0 0 1 7.2 1.3V4.6H0.2V1.3A1.1 1.1 0 0 1 1.3 0.2Z" fill="url(#fg5)"/><path d="M2.2 0.9V3.0M3.3 0.9V2.2M4.6 1.0H5.6" stroke="#e8f2fc" stroke-width="0.55" fill="none"/><rect x="1.9" y="5.5" width="1.3" height="1.5" fill="#b8bcc4"/><rect x="3.9" y="5.5" width="1.5" height="1.5" fill="#9ca0a8"/></svg>
<svg class="i" style="left:769.2px;top:293.50px" width="5" height="5" viewBox="0 0 5 5"><path d="M0.6 0.6L4.4 4.4M4.4 0.6L0.6 4.4" stroke="#9a9a9a" stroke-width="0.6"/></svg>
<svg class="i" style="left:490.30px;top:304.80px" width="250.90" height="62.80" viewBox="490.30 304.80 250.90 62.80"><rect x="490.30" y="304.80" width="250.90" height="62.80" fill="#e2f3fc"/><path d="M496.40 304.80V367.60M506.12 304.80V367.60M515.84 304.80V367.60M525.56 304.80V367.60M535.28 304.80V367.60M545.00 304.80V367.60M554.72 304.80V367.60M564.44 304.80V367.60M574.16 304.80V367.60M583.88 304.80V367.60M593.60 304.80V367.60M603.32 304.80V367.60M613.04 304.80V367.60M622.76 304.80V367.60M632.48 304.80V367.60M642.20 304.80V367.60M651.92 304.80V367.60M661.64 304.80V367.60M671.36 304.80V367.60M681.08 304.80V367.60M690.80 304.80V367.60M700.52 304.80V367.60M710.24 304.80V367.60M719.96 304.80V367.60M729.68 304.80V367.60M739.40 304.80V367.60M490.30 358.18H741.20M490.30 348.46H741.20M490.30 338.74H741.20M490.30 329.02H741.20M490.30 319.30H741.20M490.30 309.58H741.20" stroke="#aec8e8" stroke-width="0.72" opacity="1.00" fill="none"/><path d="M490.30 367.60 L490.30 367.25 L502.00 367.25 L502.00 316.30 L508.90 316.30 L508.90 360.00 L510.80 360.00 L510.80 367.25 L567.50 367.25 L567.50 316.30 L574.40 316.30 L574.40 360.00 L576.20 360.00 L576.20 367.25 L609.40 367.25 L609.40 316.30 L616.40 316.30 L616.40 357.00 L620.40 357.00 L620.40 367.25 L628.60 367.25 L628.60 316.30 L635.80 316.30 L635.80 360.00 L637.40 360.00 L637.40 367.25 L741.20 367.25 L741.20 367.60 Z" fill="#98b2b2"/><g clip-path="url(#c5)"><path d="M496.40 304.80V367.60M506.12 304.80V367.60M515.84 304.80V367.60M525.56 304.80V367.60M535.28 304.80V367.60M545.00 304.80V367.60M554.72 304.80V367.60M564.44 304.80V367.60M574.16 304.80V367.60M583.88 304.80V367.60M593.60 304.80V367.60M603.32 304.80V367.60M613.04 304.80V367.60M622.76 304.80V367.60M632.48 304.80V367.60M642.20 304.80V367.60M651.92 304.80V367.60M661.64 304.80V367.60M671.36 304.80V367.60M681.08 304.80V367.60M690.80 304.80V367.60M700.52 304.80V367.60M710.24 304.80V367.60M719.96 304.80V367.60M729.68 304.80V367.60M739.40 304.80V367.60M490.30 358.18H741.20M490.30 348.46H741.20M490.30 338.74H741.20M490.30 329.02H741.20M490.30 319.30H741.20M490.30 309.58H741.20" stroke="#b8ccf0" stroke-width="0.72" opacity="0.70" fill="none"/></g><clipPath id="c5"><path d="M490.30 367.60 L490.30 367.25 L502.00 367.25 L502.00 316.30 L508.90 316.30 L508.90 360.00 L510.80 360.00 L510.80 367.25 L567.50 367.25 L567.50 316.30 L574.40 316.30 L574.40 360.00 L576.20 360.00 L576.20 367.25 L609.40 367.25 L609.40 316.30 L616.40 316.30 L616.40 357.00 L620.40 357.00 L620.40 367.25 L628.60 367.25 L628.60 316.30 L635.80 316.30 L635.80 360.00 L637.40 360.00 L637.40 367.25 L741.20 367.25 L741.20 367.60 Z"/></clipPath><path d="M490.30 367.25 L502.00 367.25 L502.00 316.30 L508.90 316.30 L508.90 360.00 L510.80 360.00 L510.80 367.25 L567.50 367.25 L567.50 316.30 L574.40 316.30 L574.40 360.00 L576.20 360.00 L576.20 367.25 L609.40 367.25 L609.40 316.30 L616.40 316.30 L616.40 357.00 L620.40 357.00 L620.40 367.25 L628.60 367.25 L628.60 316.30 L635.80 316.30 L635.80 360.00 L637.40 360.00 L637.40 367.25 L741.20 367.25" fill="none" stroke="#3c9c94" stroke-width="0.8"/><path d="M490.60 304.80V367.60" stroke="#a8c8e4" stroke-width="0.7" fill="none"/><path d="M490.30 304.70H741.20" stroke="#a4a8ae" stroke-width="0.8" fill="none"/></svg>
<div class="ul" style="top:311.90px"></div>
<div class="sw" style="left:745.7px;top:321.00px;height:4.00px;background:#0c8080"></div>
<div class="sw" style="left:756.6px;top:321.00px;height:4.00px;background:#dcecf6"></div>
<div class="sw" style="left:766.2px;top:321.00px;height:4.00px;background:#a8c0dc"></div>
<div class="vb" style="top:328.30px"></div>
<div class="ul" style="top:335.10px"></div>
<div class="bt" style="left:743.4px;top:345.50px;width:16.2px"></div>
<div class="bt" style="left:761.8px;top:345.50px;width:11.8px"></div>
<div class="gw" style="left:489.30px;top:372.60px;width:289.30px;height:71.20px"></div>
<div style="left:489.30px;top:372.60px;width:289.30px;height:14.70px;border-radius:1.6px 1.6px 0 0;background:linear-gradient(#d6d6d6 0%,#dcdcdc 55%,#eaeaea 70%,#efefef 100%)"></div>
<svg class="i" style="left:493.50px;top:375.50px" width="7.4" height="7.8" viewBox="0 0 7.4 7.8"><defs><linearGradient id="fg6" x1="0" y1="0" x2="0" y2="1"><stop offset="0" stop-color="#5aa8f0"/><stop offset="1" stop-color="#174a90"/></linearGradient></defs><rect x="0.2" y="0.2" width="7" height="7.4" rx="1.1" fill="#0c0e12"/><path d="M1.3 0.2H6.1A1.1 1.1 0 0 1 7.2 1.3V4.6H0.2V1.3A1.1 1.1 0 0 1 1.3 0.2Z" fill="url(#fg6)"/><path d="M2.2 0.9V3.0M3.3 0.9V2.2M4.6 1.0H5.6" stroke="#e8f2fc" stroke-width="0.55" fill="none"/><rect x="1.9" y="5.5" width="1.3" height="1.5" fill="#b8bcc4"/><rect x="3.9" y="5.5" width="1.5" height="1.5" fill="#9ca0a8"/></svg>
<svg class="i" style="left:769.2px;top:376.00px" width="5" height="5" viewBox="0 0 5 5"><path d="M0.6 0.6L4.4 4.4M4.4 0.6L0.6 4.4" stroke="#9a9a9a" stroke-width="0.6"/></svg>
<svg class="i" style="left:490.30px;top:387.30px" width="250.90" height="56.30" viewBox="490.30 387.30 250.90 56.30"><rect x="490.30" y="387.30" width="250.90" height="56.30" fill="#e2f3fc"/><path d="M494.50 387.30V443.60M504.22 387.30V443.60M513.94 387.30V443.60M523.66 387.30V443.60M533.38 387.30V443.60M543.10 387.30V443.60M552.82 387.30V443.60M562.54 387.30V443.60M572.26 387.30V443.60M581.98 387.30V443.60M591.70 387.30V443.60M601.42 387.30V443.60M611.14 387.30V443.60M620.86 387.30V443.60M630.58 387.30V443.60M640.30 387.30V443.60M650.02 387.30V443.60M659.74 387.30V443.60M669.46 387.30V443.60M679.18 387.30V443.60M688.90 387.30V443.60M698.62 387.30V443.60M708.34 387.30V443.60M718.06 387.30V443.60M727.78 387.30V443.60M737.50 387.30V443.60M490.30 434.18H741.20M490.30 424.46H741.20M490.30 414.74H741.20M490.30 405.02H741.20M490.30 395.30H741.20" stroke="#aec8e8" stroke-width="0.72" opacity="1.00" fill="none"/><path d="M490.30 443.60 L490.30 443.25 L502.00 443.25 L502.00 421.60 L510.40 421.60 L510.40 443.25 L567.50 443.25 L567.50 417.80 L577.40 417.80 L577.40 443.25 L609.40 443.25 L609.40 417.50 L621.20 417.50 L621.20 443.25 L628.60 443.25 L628.60 417.00 L637.40 417.00 L637.40 443.25 L741.20 443.25 L741.20 443.60 Z" fill="#fc9aba"/><g clip-path="url(#c6)"><path d="M494.50 387.30V443.60M504.22 387.30V443.60M513.94 387.30V443.60M523.66 387.30V443.60M533.38 387.30V443.60M543.10 387.30V443.60M552.82 387.30V443.60M562.54 387.30V443.60M572.26 387.30V443.60M581.98 387.30V443.60M591.70 387.30V443.60M601.42 387.30V443.60M611.14 387.30V443.60M620.86 387.30V443.60M630.58 387.30V443.60M640.30 387.30V443.60M650.02 387.30V443.60M659.74 387.30V443.60M669.46 387.30V443.60M679.18 387.30V443.60M688.90 387.30V443.60M698.62 387.30V443.60M708.34 387.30V443.60M718.06 387.30V443.60M727.78 387.30V443.60M737.50 387.30V443.60M490.30 434.18H741.20M490.30 424.46H741.20M490.30 414.74H741.20M490.30 405.02H741.20M490.30 395.30H741.20" stroke="#b8ccf0" stroke-width="0.72" opacity="0.70" fill="none"/></g><clipPath id="c6"><path d="M490.30 443.60 L490.30 443.25 L502.00 443.25 L502.00 421.60 L510.40 421.60 L510.40 443.25 L567.50 443.25 L567.50 417.80 L577.40 417.80 L577.40 443.25 L609.40 443.25 L609.40 417.50 L621.20 417.50 L621.20 443.25 L628.60 443.25 L628.60 417.00 L637.40 417.00 L637.40 443.25 L741.20 443.25 L741.20 443.60 Z"/></clipPath><path d="M490.30 443.25 L502.00 443.25 L502.00 421.60 L510.40 421.60 L510.40 443.25 L567.50 443.25 L567.50 417.80 L577.40 417.80 L577.40 443.25 L609.40 443.25 L609.40 417.50 L621.20 417.50 L621.20 443.25 L628.60 443.25 L628.60 417.00 L637.40 417.00 L637.40 443.25 L741.20 443.25" fill="none" stroke="#f04488" stroke-width="0.8"/><path d="M490.60 387.30V443.60" stroke="#a8c8e4" stroke-width="0.7" fill="none"/><path d="M490.30 387.20H741.20" stroke="#a4a8ae" stroke-width="0.8" fill="none"/></svg>
<div class="ul" style="top:394.40px"></div>
<div class="sw" style="left:745.7px;top:397.80px;height:4.00px;background:#f01080"></div>
<div class="sw" style="left:756.6px;top:397.80px;height:4.00px;background:#dcecf6"></div>
<div class="sw" style="left:766.2px;top:397.80px;height:4.00px;background:#a8c0dc"></div>
<div class="vb" style="top:405.40px"></div>
<div class="ul" style="top:412.20px"></div>
<div class="bt" style="left:743.4px;top:422.30px;width:16.2px"></div>
<div class="bt" style="left:761.8px;top:422.30px;width:11.8px"></div>
<div class="gw" style="left:489.30px;top:449.10px;width:289.30px;height:69.40px"></div>
<div style="left:489.30px;top:449.10px;width:289.30px;height:14.60px;border-radius:1.6px 1.6px 0 0;background:linear-gradient(#d6d6d6 0%,#dcdcdc 55%,#eaeaea 70%,#efefef 100%)"></div>
<svg class="i" style="left:493.50px;top:452.00px" width="7.4" height="7.8" viewBox="0 0 7.4 7.8"><defs><linearGradient id="fg7" x1="0" y1="0" x2="0" y2="1"><stop offset="0" stop-color="#5aa8f0"/><stop offset="1" stop-color="#174a90"/></linearGradient></defs><rect x="0.2" y="0.2" width="7" height="7.4" rx="1.1" fill="#0c0e12"/><path d="M1.3 0.2H6.1A1.1 1.1 0 0 1 7.2 1.3V4.6H0.2V1.3A1.1 1.1 0 0 1 1.3 0.2Z" fill="url(#fg7)"/><path d="M2.2 0.9V3.0M3.3 0.9V2.2M4.6 1.0H5.6" stroke="#e8f2fc" stroke-width="0.55" fill="none"/><rect x="1.9" y="5.5" width="1.3" height="1.5" fill="#b8bcc4"/><rect x="3.9" y="5.5" width="1.5" height="1.5" fill="#9ca0a8"/></svg>
<svg class="i" style="left:769.2px;top:452.40px" width="5" height="5" viewBox="0 0 5 5"><path d="M0.6 0.6L4.4 4.4M4.4 0.6L0.6 4.4" stroke="#9a9a9a" stroke-width="0.6"/></svg>
<svg class="i" style="left:490.30px;top:463.70px" width="250.90" height="54.60" viewBox="490.30 463.70 250.90 54.60"><rect x="490.30" y="463.70" width="250.90" height="54.60" fill="#e2f3fc"/><path d="M494.50 463.70V518.30M504.22 463.70V518.30M513.94 463.70V518.30M523.66 463.70V518.30M533.38 463.70V518.30M543.10 463.70V518.30M552.82 463.70V518.30M562.54 463.70V518.30M572.26 463.70V518.30M581.98 463.70V518.30M591.70 463.70V518.30M601.42 463.70V518.30M611.14 463.70V518.30M620.86 463.70V518.30M630.58 463.70V518.30M640.30 463.70V518.30M650.02 463.70V518.30M659.74 463.70V518.30M669.46 463.70V518.30M679.18 463.70V518.30M688.90 463.70V518.30M698.62 463.70V518.30M708.34 463.70V518.30M718.06 463.70V518.30M727.78 463.70V518.30M737.50 463.70V518.30M490.30 508.88H741.20M490.30 499.16H741.20M490.30 489.44H741.20M490.30 479.72H741.20M490.30 470.00H741.20" stroke="#aec8e8" stroke-width="0.72" opacity="1.00" fill="none"/><path d="M490.30 518.30 L490.30 517.95 L502.30 517.95 L502.30 512.40 L508.80 512.40 L508.80 515.80 L510.40 515.80 L510.40 517.95 L567.20 517.95 L567.20 512.40 L575.00 512.40 L575.00 516.20 L577.50 516.20 L577.50 517.95 L609.40 517.95 L609.40 512.40 L618.30 512.40 L618.30 516.20 L621.20 516.20 L621.20 517.95 L628.30 517.95 L628.30 512.40 L637.10 512.40 L637.10 517.95 L741.20 517.95 L741.20 518.30 Z" fill="#a0aab8"/><g clip-path="url(#c7)"><path d="M494.50 463.70V518.30M504.22 463.70V518.30M513.94 463.70V518.30M523.66 463.70V518.30M533.38 463.70V518.30M543.10 463.70V518.30M552.82 463.70V518.30M562.54 463.70V518.30M572.26 463.70V518.30M581.98 463.70V518.30M591.70 463.70V518.30M601.42 463.70V518.30M611.14 463.70V518.30M620.86 463.70V518.30M630.58 463.70V518.30M640.30 463.70V518.30M650.02 463.70V518.30M659.74 463.70V518.30M669.46 463.70V518.30M679.18 463.70V518.30M688.90 463.70V518.30M698.62 463.70V518.30M708.34 463.70V518.30M718.06 463.70V518.30M727.78 463.70V518.30M737.50 463.70V518.30M490.30 508.88H741.20M490.30 499.16H741.20M490.30 489.44H741.20M490.30 479.72H741.20M490.30 470.00H741.20" stroke="#b8ccf0" stroke-width="0.72" opacity="0.70" fill="none"/></g><clipPath id="c7"><path d="M490.30 518.30 L490.30 517.95 L502.30 517.95 L502.30 512.40 L508.80 512.40 L508.80 515.80 L510.40 515.80 L510.40 517.95 L567.20 517.95 L567.20 512.40 L575.00 512.40 L575.00 516.20 L577.50 516.20 L577.50 517.95 L609.40 517.95 L609.40 512.40 L618.30 512.40 L618.30 516.20 L621.20 516.20 L621.20 517.95 L628.30 517.95 L628.30 512.40 L637.10 512.40 L637.10 517.95 L741.20 517.95 L741.20 518.30 Z"/></clipPath><path d="M490.30 517.95 L502.30 517.95 L502.30 512.40 L508.80 512.40 L508.80 515.80 L510.40 515.80 L510.40 517.95 L567.20 517.95 L567.20 512.40 L575.00 512.40 L575.00 516.20 L577.50 516.20 L577.50 517.95 L609.40 517.95 L609.40 512.40 L618.30 512.40 L618.30 516.20 L621.20 516.20 L621.20 517.95 L628.30 517.95 L628.30 512.40 L637.10 512.40 L637.10 517.95 L741.20 517.95" fill="none" stroke="#3c6088" stroke-width="0.8"/><path d="M490.60 463.70V518.30" stroke="#a8c8e4" stroke-width="0.7" fill="none"/><path d="M490.30 463.60H741.20" stroke="#a4a8ae" stroke-width="0.8" fill="none"/></svg>
<div class="ul" style="top:470.90px"></div>
<div class="sw" style="left:745.7px;top:472.50px;height:4.00px;background:#0c3c78"></div>
<div class="sw" style="left:756.6px;top:472.50px;height:4.00px;background:#dcecf6"></div>
<div class="sw" style="left:766.2px;top:472.50px;height:4.00px;background:#a8c0dc"></div>
<div class="vb" style="top:479.60px"></div>
<div class="ul" style="top:486.40px"></div>
<div class="bt" style="left:743.4px;top:496.60px;width:16.2px"></div>
<div class="bt" style="left:761.8px;top:496.60px;width:11.8px"></div>
<div style="left:778.8px;top:0;width:1.2px;height:520px;background:#bebebe"></div>
<div style="left:488.5px;top:518.6px;width:291.5px;height:1.4px;background:#a8aab0"></div>
<svg class="i" style="left:0;top:0" width="780" height="520" viewBox="0 0 780 520" font-family="Liberation Sans, sans-serif" font-size="5.1" fill="#24242c"><text transform="translate(503.80 9.90) rotate(0.03) scale(0.89 1)" class="wt">P-core 0 Clock</text>
<text x="744.60" y="31.75" transform="rotate(0.03 744.60 31.75)" class="sm">3,991.2 MHz</text>
<text x="744.00" y="48.40" transform="rotate(0.03 744.00 48.40)" class="bs">Auto Fit</text>
<text x="762.40" y="48.40" transform="rotate(0.03 762.40 48.40)" class="bs">Reset</text>
<text x="744.60" y="62.65" transform="rotate(0.03 744.60 62.65)" class="sm">0.0</text>
<text transform="translate(503.80 79.10) rotate(0.03) scale(0.89 1)" class="wt">E-core 4 Clock</text>
<text x="744.60" y="90.45" transform="rotate(0.03 744.60 90.45)" class="sm">3500.0</text>
<text x="744.60" y="103.45" transform="rotate(0.03 744.60 103.45)" class="sm">3,193.0 MHz</text>
<text x="744.00" y="120.50" transform="rotate(0.03 744.00 120.50)" class="bs">Auto Fit</text>
<text x="762.40" y="120.50" transform="rotate(0.03 762.40 120.50)" class="bs">Reset</text>
<text x="744.60" y="134.95" transform="rotate(0.03 744.60 134.95)" class="sm">0.0</text>
<text transform="translate(503.80 151.20) rotate(0.03) scale(0.89 1)" class="wt">CPU Package Temperature</text>
<text x="744.60" y="162.95" transform="rotate(0.03 744.60 162.95)" class="sm">100</text>
<text x="744.60" y="177.65" transform="rotate(0.03 744.60 177.65)" class="sm">86 °C</text>
<text x="744.00" y="194.60" transform="rotate(0.03 744.00 194.60)" class="bs">Auto Fit</text>
<text x="762.40" y="194.60" transform="rotate(0.03 762.40 194.60)" class="bs">Reset</text>
<text x="744.60" y="208.95" transform="rotate(0.03 744.60 208.95)" class="sm">0</text>
<text transform="translate(503.80 224.60) rotate(0.03) scale(0.89 1)" class="wt">CPU Package Power</text>
<text x="744.60" y="236.45" transform="rotate(0.03 744.60 236.45)" class="sm">80.000</text>
<text x="744.60" y="251.45" transform="rotate(0.03 744.60 251.45)" class="sm">64.455 W</text>
<text x="744.00" y="268.50" transform="rotate(0.03 744.00 268.50)" class="bs">Auto Fit</text>
<text x="762.40" y="268.50" transform="rotate(0.03 762.40 268.50)" class="bs">Reset</text>
<text x="744.60" y="282.75" transform="rotate(0.03 744.60 282.75)" class="sm">0.000</text>
<text transform="translate(503.80 299.10) rotate(0.03) scale(0.89 1)" class="wt">GPU Clock</text>
<text x="744.60" y="310.45" transform="rotate(0.03 744.60 310.45)" class="sm">1800.0</text>
<text x="744.60" y="333.55" transform="rotate(0.03 744.60 333.55)" class="sm">0.0 MHz</text>
<text x="744.00" y="350.90" transform="rotate(0.03 744.00 350.90)" class="bs">Auto Fit</text>
<text x="762.40" y="350.90" transform="rotate(0.03 762.40 350.90)" class="bs">Reset</text>
<text x="744.60" y="365.25" transform="rotate(0.03 744.60 365.25)" class="sm">0.0</text>
<text transform="translate(503.80 381.30) rotate(0.03) scale(0.89 1)" class="wt">GPU Temperature</text>
<text x="744.60" y="392.95" transform="rotate(0.03 744.60 392.95)" class="sm">100.0</text>
<text x="744.60" y="410.65" transform="rotate(0.03 744.60 410.65)" class="sm">0.0 °C</text>
<text x="744.00" y="427.70" transform="rotate(0.03 744.00 427.70)" class="bs">Auto Fit</text>
<text x="762.40" y="427.70" transform="rotate(0.03 762.40 427.70)" class="bs">Reset</text>
<text x="744.60" y="441.65" transform="rotate(0.03 744.60 441.65)" class="sm">0.0</text>
<text transform="translate(503.80 457.80) rotate(0.03) scale(0.89 1)" class="wt">GPU Power</text>
<text x="744.60" y="469.45" transform="rotate(0.03 744.60 469.45)" class="sm">70.000</text>
<text x="744.60" y="484.85" transform="rotate(0.03 744.60 484.85)" class="sm">0.000 W</text>
<text x="744.00" y="502.00" transform="rotate(0.03 744.00 502.00)" class="bs">Auto Fit</text>
<text x="762.40" y="502.00" transform="rotate(0.03 762.40 502.00)" class="bs">Reset</text>
<text x="744.60" y="516.65" transform="rotate(0.03 744.60 516.65)" class="sm">0.000</text>
<text transform="translate(14.80 9.70) rotate(0.03) scale(0.89 1)" class="tt">HWiNFO64 v7.36-4960 Sensor Status [185 values hidden]</text>
<text x="4.20" y="23.85" transform="rotate(0.03 4.20 23.85)" class="hd">Sensor</text>
<text x="161.80" y="23.85" transform="rotate(0.03 161.80 23.85)" text-anchor="end" class="hd">Current</text>
<text x="201.00" y="23.85" transform="rotate(0.03 201.00 23.85)" text-anchor="end" class="hd">Minimum</text>
<text x="239.80" y="23.85" transform="rotate(0.03 239.80 23.85)" text-anchor="end" class="hd">Maximum</text>
<text x="247.20" y="22.95" transform="rotate(0.03 247.20 22.95)" class="hd">Sensor</text>
<text x="405.50" y="22.95" transform="rotate(0.03 405.50 22.95)" text-anchor="end" class="hd">Current</text>
<text x="444.20" y="22.95" transform="rotate(0.03 444.20 22.95)" text-anchor="end" class="hd">Minimum</text>
<text x="482.90" y="22.95" transform="rotate(0.03 482.90 22.95)" text-anchor="end" class="hd">Maximum</text>
<text x="21.50" y="33.85" transform="rotate(0.03 21.50 33.85)" class="gh">CPU [#0]: Intel Core i5-12450H</text>
<text x="28.90" y="42.09" transform="rotate(0.03 28.90 42.09)">Core Clocks</text>
<text x="161.80" y="42.09" transform="rotate(0.03 161.80 42.09)" text-anchor="end">3,592.1 MHz</text>
<text x="201.00" y="42.09" transform="rotate(0.03 201.00 42.09)" text-anchor="end">997.6 MHz</text>
<text x="239.80" y="42.09" transform="rotate(0.03 239.80 42.09)" text-anchor="end">4,091.0 MHz</text>
<text x="28.90" y="50.33" transform="rotate(0.03 28.90 50.33)">P-core 0 Clock</text>
<text x="161.80" y="50.33" transform="rotate(0.03 161.80 50.33)" text-anchor="end">3,991.2 MHz</text>
<text x="201.00" y="50.33" transform="rotate(0.03 201.00 50.33)" text-anchor="end">1,097.3 MHz</text>
<text x="239.80" y="50.33" transform="rotate(0.03 239.80 50.33)" text-anchor="end">4,091.0 MHz</text>
<text x="28.90" y="58.57" transform="rotate(0.03 28.90 58.57)">P-core 1 Clock</text>
<text x="161.80" y="58.57" transform="rotate(0.03 161.80 58.57)" text-anchor="end">3,991.2 MHz</text>
<text x="201.00" y="58.57" transform="rotate(0.03 201.00 58.57)" text-anchor="end">997.6 MHz</text>
<text x="239.80" y="58.57" transform="rotate(0.03 239.80 58.57)" text-anchor="end">4,091.0 MHz</text>
<text x="28.90" y="66.81" transform="rotate(0.03 28.90 66.81)">P-core 2 Clock</text>
<text x="161.80" y="66.81" transform="rotate(0.03 161.80 66.81)" text-anchor="end">3,991.2 MHz</text>
<text x="201.00" y="66.81" transform="rotate(0.03 201.00 66.81)" text-anchor="end">1,097.3 MHz</text>
<text x="239.80" y="66.81" transform="rotate(0.03 239.80 66.81)" text-anchor="end">4,091.0 MHz</text>
<text x="28.90" y="75.05" transform="rotate(0.03 28.90 75.05)">P-core 3 Clock</text>
<text x="161.80" y="75.05" transform="rotate(0.03 161.80 75.05)" text-anchor="end">3,991.2 MHz</text>
<text x="201.00" y="75.05" transform="rotate(0.03 201.00 75.05)" text-anchor="end">1,097.3 MHz</text>
<text x="239.80" y="75.05" transform="rotate(0.03 239.80 75.05)" text-anchor="end">4,091.0 MHz</text>
<text x="28.90" y="83.29" transform="rotate(0.03 28.90 83.29)">E-core 4 Clock</text>
<text x="161.80" y="83.29" transform="rotate(0.03 161.80 83.29)" text-anchor="end">3,193.0 MHz</text>
<text x="201.00" y="83.29" transform="rotate(0.03 201.00 83.29)" text-anchor="end">1,496.3 MHz</text>
<text x="239.80" y="83.29" transform="rotate(0.03 239.80 83.29)" text-anchor="end">3,292.7 MHz</text>
<text x="28.90" y="91.53" transform="rotate(0.03 28.90 91.53)">E-core 5 Clock</text>
<text x="161.80" y="91.53" transform="rotate(0.03 161.80 91.53)" text-anchor="end">3,193.0 MHz</text>
<text x="201.00" y="91.53" transform="rotate(0.03 201.00 91.53)" text-anchor="end">1,496.3 MHz</text>
<text x="239.80" y="91.53" transform="rotate(0.03 239.80 91.53)" text-anchor="end">3,292.7 MHz</text>
<text x="28.90" y="99.77" transform="rotate(0.03 28.90 99.77)">E-core 6 Clock</text>
<text x="161.80" y="99.77" transform="rotate(0.03 161.80 99.77)" text-anchor="end">3,193.0 MHz</text>
<text x="201.00" y="99.77" transform="rotate(0.03 201.00 99.77)" text-anchor="end">1,496.3 MHz</text>
<text x="239.80" y="99.77" transform="rotate(0.03 239.80 99.77)" text-anchor="end">3,292.7 MHz</text>
<text x="28.90" y="108.01" transform="rotate(0.03 28.90 108.01)">E-core 7 Clock</text>
<text x="161.80" y="108.01" transform="rotate(0.03 161.80 108.01)" text-anchor="end">3,193.0 MHz</text>
<text x="201.00" y="108.01" transform="rotate(0.03 201.00 108.01)" text-anchor="end">1,496.3 MHz</text>
<text x="239.80" y="108.01" transform="rotate(0.03 239.80 108.01)" text-anchor="end">3,292.7 MHz</text>
<text x="20.90" y="116.25" transform="rotate(0.03 20.90 116.25)">Bus Clock</text>
<text x="161.80" y="116.25" transform="rotate(0.03 161.80 116.25)" text-anchor="end">99.8 MHz</text>
<text x="201.00" y="116.25" transform="rotate(0.03 201.00 116.25)" text-anchor="end">99.7 MHz</text>
<text x="239.80" y="116.25" transform="rotate(0.03 239.80 116.25)" text-anchor="end">99.8 MHz</text>
<text x="20.90" y="124.49" transform="rotate(0.03 20.90 124.49)">Ring/LLC Clock</text>
<text x="161.80" y="124.49" transform="rotate(0.03 161.80 124.49)" text-anchor="end">3,592.1 MHz</text>
<text x="201.00" y="124.49" transform="rotate(0.03 201.00 124.49)" text-anchor="end">698.3 MHz</text>
<text x="239.80" y="124.49" transform="rotate(0.03 239.80 124.49)" text-anchor="end">3,592.1 MHz</text>
<text x="28.90" y="132.73" transform="rotate(0.03 28.90 132.73)">Core Effective Clocks</text>
<text x="161.80" y="132.73" transform="rotate(0.03 161.80 132.73)" text-anchor="end">3,718.2 MHz</text>
<text x="201.00" y="132.73" transform="rotate(0.03 201.00 132.73)" text-anchor="end">0.1 MHz</text>
<text x="239.80" y="132.73" transform="rotate(0.03 239.80 132.73)" text-anchor="end">4,090.4 MHz</text>
<text x="20.90" y="140.97" transform="rotate(0.03 20.90 140.97)">Average Effective Clock</text>
<text x="161.80" y="140.97" transform="rotate(0.03 161.80 140.97)" text-anchor="end">3,823.0 MHz</text>
<text x="201.00" y="140.97" transform="rotate(0.03 201.00 140.97)" text-anchor="end">25.3 MHz</text>
<text x="239.80" y="140.97" transform="rotate(0.03 239.80 140.97)" text-anchor="end">3,930.2 MHz</text>
<text x="28.90" y="149.21" transform="rotate(0.03 28.90 149.21)">Core Ratios</text>
<text x="161.80" y="149.21" transform="rotate(0.03 161.80 149.21)" text-anchor="end">36.0 x</text>
<text x="201.00" y="149.21" transform="rotate(0.03 201.00 149.21)" text-anchor="end">10.0 x</text>
<text x="239.80" y="149.21" transform="rotate(0.03 239.80 149.21)" text-anchor="end">41.0 x</text>
<text x="20.90" y="157.45" transform="rotate(0.03 20.90 157.45)">Uncore Ratio</text>
<text x="161.80" y="157.45" transform="rotate(0.03 161.80 157.45)" text-anchor="end">36.0 x</text>
<text x="201.00" y="157.45" transform="rotate(0.03 201.00 157.45)" text-anchor="end">7.0 x</text>
<text x="239.80" y="157.45" transform="rotate(0.03 239.80 157.45)" text-anchor="end">36.0 x</text>
<text x="21.50" y="173.93" transform="rotate(0.03 21.50 173.93)" class="gh">CPU [#0]: Intel Core i5-12450H: DTS</text>
<text x="28.90" y="182.17" transform="rotate(0.03 28.90 182.17)">Core Temperatures</text>
<text x="161.80" y="182.17" transform="rotate(0.03 161.80 182.17)" text-anchor="end">72 °C</text>
<text x="201.00" y="182.17" transform="rotate(0.03 201.00 182.17)" text-anchor="end">29 °C</text>
<text x="239.80" y="182.17" transform="rotate(0.03 239.80 182.17)" text-anchor="end">90 °C</text>
<text x="28.90" y="190.41" transform="rotate(0.03 28.90 190.41)">P-core 0</text>
<text x="161.80" y="190.41" transform="rotate(0.03 161.80 190.41)" text-anchor="end">77 °C</text>
<text x="201.00" y="190.41" transform="rotate(0.03 201.00 190.41)" text-anchor="end">31 °C</text>
<text x="239.80" y="190.41" transform="rotate(0.03 239.80 190.41)" text-anchor="end">82 °C</text>
<text x="28.90" y="198.65" transform="rotate(0.03 28.90 198.65)">P-core 1</text>
<text x="161.80" y="198.65" transform="rotate(0.03 161.80 198.65)" text-anchor="end">88 °C</text>
<text x="201.00" y="198.65" transform="rotate(0.03 201.00 198.65)" text-anchor="end">29 °C</text>
<text x="239.80" y="198.65" transform="rotate(0.03 239.80 198.65)" text-anchor="end">90 °C</text>
<text x="28.90" y="206.89" transform="rotate(0.03 28.90 206.89)">P-core 2</text>
<text x="161.80" y="206.89" transform="rotate(0.03 161.80 206.89)" text-anchor="end">79 °C</text>
<text x="201.00" y="206.89" transform="rotate(0.03 201.00 206.89)" text-anchor="end">30 °C</text>
<text x="239.80" y="206.89" transform="rotate(0.03 239.80 206.89)" text-anchor="end">80 °C</text>
<text x="28.90" y="215.13" transform="rotate(0.03 28.90 215.13)">P-core 3</text>
<text x="161.80" y="215.13" transform="rotate(0.03 161.80 215.13)" text-anchor="end">82 °C</text>
<text x="201.00" y="215.13" transform="rotate(0.03 201.00 215.13)" text-anchor="end">29 °C</text>
<text x="239.80" y="215.13" transform="rotate(0.03 239.80 215.13)" text-anchor="end">83 °C</text>
<text x="28.90" y="223.37" transform="rotate(0.03 28.90 223.37)">E-core 4</text>
<text x="161.80" y="223.37" transform="rotate(0.03 161.80 223.37)" text-anchor="end">62 °C</text>
<text x="201.00" y="223.37" transform="rotate(0.03 201.00 223.37)" text-anchor="end">31 °C</text>
<text x="239.80" y="223.37" transform="rotate(0.03 239.80 223.37)" text-anchor="end">64 °C</text>
<text x="28.90" y="231.61" transform="rotate(0.03 28.90 231.61)">E-core 5</text>
<text x="161.80" y="231.61" transform="rotate(0.03 161.80 231.61)" text-anchor="end">62 °C</text>
<text x="201.00" y="231.61" transform="rotate(0.03 201.00 231.61)" text-anchor="end">31 °C</text>
<text x="239.80" y="231.61" transform="rotate(0.03 239.80 231.61)" text-anchor="end">64 °C</text>
<text x="28.90" y="239.85" transform="rotate(0.03 28.90 239.85)">E-core 6</text>
<text x="161.80" y="239.85" transform="rotate(0.03 161.80 239.85)" text-anchor="end">61 °C</text>
<text x="201.00" y="239.85" transform="rotate(0.03 201.00 239.85)" text-anchor="end">31 °C</text>
<text x="239.80" y="239.85" transform="rotate(0.03 239.80 239.85)" text-anchor="end">64 °C</text>
<text x="28.90" y="248.09" transform="rotate(0.03 28.90 248.09)">E-core 7</text>
<text x="161.80" y="248.09" transform="rotate(0.03 161.80 248.09)" text-anchor="end">61 °C</text>
<text x="201.00" y="248.09" transform="rotate(0.03 201.00 248.09)" text-anchor="end">31 °C</text>
<text x="239.80" y="248.09" transform="rotate(0.03 239.80 248.09)" text-anchor="end">64 °C</text>
<text x="28.90" y="256.33" transform="rotate(0.03 28.90 256.33)">Core Distance to TjMAX</text>
<text x="161.80" y="256.33" transform="rotate(0.03 161.80 256.33)" text-anchor="end">29 °C</text>
<text x="201.00" y="256.33" transform="rotate(0.03 201.00 256.33)" text-anchor="end">10 °C</text>
<text x="239.80" y="256.33" transform="rotate(0.03 239.80 256.33)" text-anchor="end">71 °C</text>
<text x="20.90" y="264.57" transform="rotate(0.03 20.90 264.57)">CPU Package</text>
<text x="161.80" y="264.57" transform="rotate(0.03 161.80 264.57)" text-anchor="end">86 °C</text>
<text x="201.00" y="264.57" transform="rotate(0.03 201.00 264.57)" text-anchor="end">34 °C</text>
<text x="239.80" y="264.57" transform="rotate(0.03 239.80 264.57)" text-anchor="end">90 °C</text>
<text x="20.90" y="272.81" transform="rotate(0.03 20.90 272.81)">Core Max</text>
<text x="161.80" y="272.81" transform="rotate(0.03 161.80 272.81)" text-anchor="end">88 °C</text>
<text x="201.00" y="272.81" transform="rotate(0.03 201.00 272.81)" text-anchor="end">31 °C</text>
<text x="239.80" y="272.81" transform="rotate(0.03 239.80 272.81)" text-anchor="end">90 °C</text>
<text x="28.90" y="281.05" transform="rotate(0.03 28.90 281.05)">Core Thermal Throttling</text>
<text x="161.80" y="281.05" transform="rotate(0.03 161.80 281.05)" text-anchor="end">No</text>
<text x="201.00" y="281.05" transform="rotate(0.03 201.00 281.05)" text-anchor="end">No</text>
<text x="239.80" y="281.05" transform="rotate(0.03 239.80 281.05)" text-anchor="end">No</text>
<text x="28.90" y="289.29" transform="rotate(0.03 28.90 289.29)">P-core 0 Thermal Throttling</text>
<text x="161.80" y="289.29" transform="rotate(0.03 161.80 289.29)" text-anchor="end">No</text>
<text x="201.00" y="289.29" transform="rotate(0.03 201.00 289.29)" text-anchor="end">No</text>
<text x="239.80" y="289.29" transform="rotate(0.03 239.80 289.29)" text-anchor="end">No</text>
<text x="28.90" y="297.53" transform="rotate(0.03 28.90 297.53)">P-core 1 Thermal Throttling</text>
<text x="161.80" y="297.53" transform="rotate(0.03 161.80 297.53)" text-anchor="end">No</text>
<text x="201.00" y="297.53" transform="rotate(0.03 201.00 297.53)" text-anchor="end">No</text>
<text x="239.80" y="297.53" transform="rotate(0.03 239.80 297.53)" text-anchor="end">No</text>
<text x="28.90" y="305.77" transform="rotate(0.03 28.90 305.77)">P-core 2 Thermal Throttling</text>
<text x="161.80" y="305.77" transform="rotate(0.03 161.80 305.77)" text-anchor="end">No</text>
<text x="201.00" y="305.77" transform="rotate(0.03 201.00 305.77)" text-anchor="end">No</text>
<text x="239.80" y="305.77" transform="rotate(0.03 239.80 305.77)" text-anchor="end">No</text>
<text x="28.90" y="314.01" transform="rotate(0.03 28.90 314.01)">P-core 3 Thermal Throttling</text>
<text x="161.80" y="314.01" transform="rotate(0.03 161.80 314.01)" text-anchor="end">No</text>
<text x="201.00" y="314.01" transform="rotate(0.03 201.00 314.01)" text-anchor="end">No</text>
<text x="239.80" y="314.01" transform="rotate(0.03 239.80 314.01)" text-anchor="end">No</text>
<text x="28.90" y="322.25" transform="rotate(0.03 28.90 322.25)">E-core 4 Thermal Throttling</text>
<text x="161.80" y="322.25" transform="rotate(0.03 161.80 322.25)" text-anchor="end">No</text>
<text x="201.00" y="322.25" transform="rotate(0.03 201.00 322.25)" text-anchor="end">No</text>
<text x="239.80" y="322.25" transform="rotate(0.03 239.80 322.25)" text-anchor="end">No</text>
<text x="28.90" y="330.49" transform="rotate(0.03 28.90 330.49)">E-core 5 Thermal Throttling</text>
<text x="161.80" y="330.49" transform="rotate(0.03 161.80 330.49)" text-anchor="end">No</text>
<text x="201.00" y="330.49" transform="rotate(0.03 201.00 330.49)" text-anchor="end">No</text>
<text x="239.80" y="330.49" transform="rotate(0.03 239.80 330.49)" text-anchor="end">No</text>
<text x="28.90" y="338.73" transform="rotate(0.03 28.90 338.73)">E-core 6 Thermal Throttling</text>
<text x="161.80" y="338.73" transform="rotate(0.03 161.80 338.73)" text-anchor="end">No</text>
<text x="201.00" y="338.73" transform="rotate(0.03 201.00 338.73)" text-anchor="end">No</text>
<text x="239.80" y="338.73" transform="rotate(0.03 239.80 338.73)" text-anchor="end">No</text>
<text x="28.90" y="346.97" transform="rotate(0.03 28.90 346.97)">E-core 7 Thermal Throttling</text>
<text x="161.80" y="346.97" transform="rotate(0.03 161.80 346.97)" text-anchor="end">No</text>
<text x="201.00" y="346.97" transform="rotate(0.03 201.00 346.97)" text-anchor="end">No</text>
<text x="239.80" y="346.97" transform="rotate(0.03 239.80 346.97)" text-anchor="end">No</text>
<text x="28.90" y="355.21" transform="rotate(0.03 28.90 355.21)">Core Critical Temperature</text>
<text x="161.80" y="355.21" transform="rotate(0.03 161.80 355.21)" text-anchor="end">No</text>
<text x="201.00" y="355.21" transform="rotate(0.03 201.00 355.21)" text-anchor="end">No</text>
<text x="239.80" y="355.21" transform="rotate(0.03 239.80 355.21)" text-anchor="end">No</text>
<text x="28.90" y="363.45" transform="rotate(0.03 28.90 363.45)">Core Power Limit Exceeded</text>
<text x="161.80" y="363.45" transform="rotate(0.03 161.80 363.45)" text-anchor="end">Yes</text>
<text x="201.00" y="363.45" transform="rotate(0.03 201.00 363.45)" text-anchor="end">No</text>
<text x="239.80" y="363.45" transform="rotate(0.03 239.80 363.45)" text-anchor="end">Yes</text>
<text x="20.90" y="371.69" transform="rotate(0.03 20.90 371.69)">Package/Ring Thermal Throttling</text>
<text x="161.80" y="371.69" transform="rotate(0.03 161.80 371.69)" text-anchor="end">No</text>
<text x="201.00" y="371.69" transform="rotate(0.03 201.00 371.69)" text-anchor="end">No</text>
<text x="239.80" y="371.69" transform="rotate(0.03 239.80 371.69)" text-anchor="end">No</text>
<text x="20.90" y="379.93" transform="rotate(0.03 20.90 379.93)">Package/Ring Critical Temperature</text>
<text x="161.80" y="379.93" transform="rotate(0.03 161.80 379.93)" text-anchor="end">No</text>
<text x="201.00" y="379.93" transform="rotate(0.03 201.00 379.93)" text-anchor="end">No</text>
<text x="239.80" y="379.93" transform="rotate(0.03 239.80 379.93)" text-anchor="end">No</text>
<text x="20.90" y="388.17" transform="rotate(0.03 20.90 388.17)">Package/Ring Power Limit Exceeded</text>
<text x="161.80" y="388.17" transform="rotate(0.03 161.80 388.17)" text-anchor="end">Yes</text>
<text x="201.00" y="388.17" transform="rotate(0.03 201.00 388.17)" text-anchor="end">No</text>
<text x="239.80" y="388.17" transform="rotate(0.03 239.80 388.17)" text-anchor="end">Yes</text>
<text x="21.50" y="404.65" transform="rotate(0.03 21.50 404.65)" class="gh">CPU [#0]: Intel Core i5-12450H: Enhanced</text>
<text x="20.90" y="412.89" transform="rotate(0.03 20.90 412.89)">CPU Package Temperature</text>
<text x="161.80" y="412.89" transform="rotate(0.03 161.80 412.89)" text-anchor="end">86 °C</text>
<text x="201.00" y="412.89" transform="rotate(0.03 201.00 412.89)" text-anchor="end">36 °C</text>
<text x="239.80" y="412.89" transform="rotate(0.03 239.80 412.89)" text-anchor="end">90 °C</text>
<text x="20.90" y="421.13" transform="rotate(0.03 20.90 421.13)">CPU IA Cores</text>
<text x="161.80" y="421.13" transform="rotate(0.03 161.80 421.13)" text-anchor="end">86 °C</text>
<text x="201.00" y="421.13" transform="rotate(0.03 201.00 421.13)" text-anchor="end">33 °C</text>
<text x="239.80" y="421.13" transform="rotate(0.03 239.80 421.13)" text-anchor="end">90 °C</text>
<text x="20.90" y="429.37" transform="rotate(0.03 20.90 429.37)">CPU GT Cores (Graphics)</text>
<text x="161.80" y="429.37" transform="rotate(0.03 161.80 429.37)" text-anchor="end">56 °C</text>
<text x="201.00" y="429.37" transform="rotate(0.03 201.00 429.37)" text-anchor="end">33 °C</text>
<text x="239.80" y="429.37" transform="rotate(0.03 239.80 429.37)" text-anchor="end">56 °C</text>
<text x="20.90" y="437.61" transform="rotate(0.03 20.90 437.61)">CPU Package Power</text>
<text x="161.80" y="437.61" transform="rotate(0.03 161.80 437.61)" text-anchor="end">64.455 W</text>
<text x="201.00" y="437.61" transform="rotate(0.03 201.00 437.61)" text-anchor="end">1.765 W</text>
<text x="239.80" y="437.61" transform="rotate(0.03 239.80 437.61)" text-anchor="end">70.053 W</text>
<text x="20.90" y="445.85" transform="rotate(0.03 20.90 445.85)">IA Cores Power</text>
<text x="161.80" y="445.85" transform="rotate(0.03 161.80 445.85)" text-anchor="end">60.805 W</text>
<text x="201.00" y="445.85" transform="rotate(0.03 201.00 445.85)" text-anchor="end">0.635 W</text>
<text x="239.80" y="445.85" transform="rotate(0.03 239.80 445.85)" text-anchor="end">65.100 W</text>
<text x="20.90" y="454.09" transform="rotate(0.03 20.90 454.09)">GT Cores Power</text>
<text x="161.80" y="454.09" transform="rotate(0.03 161.80 454.09)" text-anchor="end">0.005 W</text>
<text x="201.00" y="454.09" transform="rotate(0.03 201.00 454.09)" text-anchor="end">0.001 W</text>
<text x="239.80" y="454.09" transform="rotate(0.03 239.80 454.09)" text-anchor="end">0.025 W</text>
<text x="20.90" y="462.33" transform="rotate(0.03 20.90 462.33)">Total System Power</text>
<text x="161.80" y="462.33" transform="rotate(0.03 161.80 462.33)" text-anchor="end">90.405 W</text>
<text x="201.00" y="462.33" transform="rotate(0.03 201.00 462.33)" text-anchor="end">4.470 W</text>
<text x="239.80" y="462.33" transform="rotate(0.03 239.80 462.33)" text-anchor="end">114.374 W</text>
<text x="20.90" y="470.57" transform="rotate(0.03 20.90 470.57)">System Agent Power</text>
<text x="161.80" y="470.57" transform="rotate(0.03 161.80 470.57)" text-anchor="end">3.084 W</text>
<text x="201.00" y="470.57" transform="rotate(0.03 201.00 470.57)" text-anchor="end">0.898 W</text>
<text x="239.80" y="470.57" transform="rotate(0.03 239.80 470.57)" text-anchor="end">5.043 W</text>
<text x="20.90" y="478.81" transform="rotate(0.03 20.90 478.81)">Rest-of-Chip Power</text>
<text x="161.80" y="478.81" transform="rotate(0.03 161.80 478.81)" text-anchor="end">0.153 W</text>
<text x="201.00" y="478.81" transform="rotate(0.03 201.00 478.81)" text-anchor="end">0.087 W</text>
<text x="239.80" y="478.81" transform="rotate(0.03 239.80 478.81)" text-anchor="end">0.224 W</text>
<text x="20.90" y="487.05" transform="rotate(0.03 20.90 487.05)">PL1 Power Limit</text>
<text x="161.80" y="487.05" transform="rotate(0.03 161.80 487.05)" text-anchor="end">100.0 W</text>
<text x="201.00" y="487.05" transform="rotate(0.03 201.00 487.05)" text-anchor="end">100.0 W</text>
<text x="239.80" y="487.05" transform="rotate(0.03 239.80 487.05)" text-anchor="end">100.0 W</text>
<text x="264.20" y="33.85" transform="rotate(0.03 264.20 33.85)">PL2 Power Limit</text>
<text x="405.50" y="33.85" transform="rotate(0.03 405.50 33.85)" text-anchor="end">125.0 W</text>
<text x="444.20" y="33.85" transform="rotate(0.03 444.20 33.85)" text-anchor="end">125.0 W</text>
<text x="482.90" y="33.85" transform="rotate(0.03 482.90 33.85)" text-anchor="end">125.0 W</text>
<text x="264.20" y="42.09" transform="rotate(0.03 264.20 42.09)">PCH Power</text>
<text x="405.50" y="42.09" transform="rotate(0.03 405.50 42.09)" text-anchor="end">0.056 W</text>
<text x="444.20" y="42.09" transform="rotate(0.03 444.20 42.09)" text-anchor="end">0.054 W</text>
<text x="482.90" y="42.09" transform="rotate(0.03 482.90 42.09)" text-anchor="end">0.059 W</text>
<text x="264.20" y="50.33" transform="rotate(0.03 264.20 50.33)">GPU Clock</text>
<text x="405.50" y="50.33" transform="rotate(0.03 405.50 50.33)" text-anchor="end">300.0 MHz</text>
<text x="444.20" y="50.33" transform="rotate(0.03 444.20 50.33)" text-anchor="end">300.0 MHz</text>
<text x="482.90" y="50.33" transform="rotate(0.03 482.90 50.33)" text-anchor="end">300.0 MHz</text>
<text x="264.20" y="58.57" transform="rotate(0.03 264.20 58.57)">GPU D3D Memory Dynamic</text>
<text x="405.50" y="58.57" transform="rotate(0.03 405.50 58.57)" text-anchor="end">495 MB</text>
<text x="444.20" y="58.57" transform="rotate(0.03 444.20 58.57)" text-anchor="end">495 MB</text>
<text x="482.90" y="58.57" transform="rotate(0.03 482.90 58.57)" text-anchor="end">556 MB</text>
<text x="264.20" y="66.81" transform="rotate(0.03 264.20 66.81)">Current cTDP Level</text>
<text x="405.50" y="66.81" transform="rotate(0.03 405.50 66.81)" text-anchor="end">0</text>
<text x="444.20" y="66.81" transform="rotate(0.03 444.20 66.81)" text-anchor="end">0</text>
<text x="482.90" y="66.81" transform="rotate(0.03 482.90 66.81)" text-anchor="end">0</text>
<text x="264.80" y="83.29" transform="rotate(0.03 264.80 83.29)" class="gh">Memory Timings</text>
<text x="264.20" y="91.53" transform="rotate(0.03 264.20 91.53)">Memory Clock</text>
<text x="405.50" y="91.53" transform="rotate(0.03 405.50 91.53)" text-anchor="end">1,596.5 MHz</text>
<text x="444.20" y="91.53" transform="rotate(0.03 444.20 91.53)" text-anchor="end">1,595.7 MHz</text>
<text x="482.90" y="91.53" transform="rotate(0.03 482.90 91.53)" text-anchor="end">1,596.5 MHz</text>
<text x="264.20" y="99.77" transform="rotate(0.03 264.20 99.77)">Memory Clock Ratio</text>
<text x="405.50" y="99.77" transform="rotate(0.03 405.50 99.77)" text-anchor="end">16.00 x</text>
<text x="444.20" y="99.77" transform="rotate(0.03 444.20 99.77)" text-anchor="end">16.00 x</text>
<text x="482.90" y="99.77" transform="rotate(0.03 482.90 99.77)" text-anchor="end">16.00 x</text>
<text x="264.80" y="116.25" transform="rotate(0.03 264.80 116.25)" class="gh">S.M.A.R.T.: YMTC PC300-512GB-B (YMA2...</text>
<text x="264.20" y="124.49" transform="rotate(0.03 264.20 124.49)">Drive Temperature</text>
<text x="405.50" y="124.49" transform="rotate(0.03 405.50 124.49)" text-anchor="end">31 °C</text>
<text x="444.20" y="124.49" transform="rotate(0.03 444.20 124.49)" text-anchor="end">26 °C</text>
<text x="482.90" y="124.49" transform="rotate(0.03 482.90 124.49)" text-anchor="end">31 °C</text>
<text x="264.20" y="132.73" transform="rotate(0.03 264.20 132.73)">Drive Temperature 2</text>
<text x="405.50" y="132.73" transform="rotate(0.03 405.50 132.73)" text-anchor="end">25 °C</text>
<text x="444.20" y="132.73" transform="rotate(0.03 444.20 132.73)" text-anchor="end">21 °C</text>
<text x="482.90" y="132.73" transform="rotate(0.03 482.90 132.73)" text-anchor="end">25 °C</text>
<text x="264.20" y="140.97" transform="rotate(0.03 264.20 140.97)">Drive Temperature 3</text>
<text x="405.50" y="140.97" transform="rotate(0.03 405.50 140.97)" text-anchor="end">31 °C</text>
<text x="444.20" y="140.97" transform="rotate(0.03 444.20 140.97)" text-anchor="end">26 °C</text>
<text x="482.90" y="140.97" transform="rotate(0.03 482.90 140.97)" text-anchor="end">31 °C</text>
<text x="264.80" y="157.45" transform="rotate(0.03 264.80 157.45)" class="gh">GPU [#1]: NVIDIA GeForce RTX 3050 Lapt...</text>
<text x="264.20" y="165.69" transform="rotate(0.03 264.20 165.69)">GPU Temperature</text>
<text x="405.50" y="165.69" transform="rotate(0.03 405.50 165.69)" text-anchor="end">0.0 °C</text>
<text x="444.20" y="165.69" transform="rotate(0.03 444.20 165.69)" text-anchor="end">0.0 °C</text>
<text x="482.90" y="165.69" transform="rotate(0.03 482.90 165.69)" text-anchor="end">48.4 °C</text>
<text x="264.20" y="173.93" transform="rotate(0.03 264.20 173.93)">GPU Hot Spot Temperature</text>
<text x="405.50" y="173.93" transform="rotate(0.03 405.50 173.93)" text-anchor="end">0.0 °C</text>
<text x="444.20" y="173.93" transform="rotate(0.03 444.20 173.93)" text-anchor="end">0.0 °C</text>
<text x="482.90" y="173.93" transform="rotate(0.03 482.90 173.93)" text-anchor="end">55.5 °C</text>
<text x="264.20" y="182.17" transform="rotate(0.03 264.20 182.17)">GPU Thermal Limit</text>
<text x="405.50" y="182.17" transform="rotate(0.03 405.50 182.17)" text-anchor="end">0.0 °C</text>
<text x="444.20" y="182.17" transform="rotate(0.03 444.20 182.17)" text-anchor="end">0.0 °C</text>
<text x="482.90" y="182.17" transform="rotate(0.03 482.90 182.17)" text-anchor="end">87.0 °C</text>
<text x="264.20" y="190.41" transform="rotate(0.03 264.20 190.41)">GPU Core Voltage</text>
<text x="405.50" y="190.41" transform="rotate(0.03 405.50 190.41)" text-anchor="end">0.000 V</text>
<text x="444.20" y="190.41" transform="rotate(0.03 444.20 190.41)" text-anchor="end">0.000 V</text>
<text x="482.90" y="190.41" transform="rotate(0.03 482.90 190.41)" text-anchor="end">0.806 V</text>
<text x="272.20" y="198.65" transform="rotate(0.03 272.20 198.65)">GPU FBVDD Input Voltage</text>
<text x="405.50" y="198.65" transform="rotate(0.03 405.50 198.65)" text-anchor="end">0.000 V</text>
<text x="444.20" y="198.65" transform="rotate(0.03 444.20 198.65)" text-anchor="end">0.000 V</text>
<text x="482.90" y="198.65" transform="rotate(0.03 482.90 198.65)" text-anchor="end">20.096 V</text>
<text x="272.20" y="206.89" transform="rotate(0.03 272.20 206.89)">GPU 8-pin #1 Input Voltage</text>
<text x="405.50" y="206.89" transform="rotate(0.03 405.50 206.89)" text-anchor="end">0.000 V</text>
<text x="444.20" y="206.89" transform="rotate(0.03 444.20 206.89)" text-anchor="end">0.000 V</text>
<text x="482.90" y="206.89" transform="rotate(0.03 482.90 206.89)" text-anchor="end">20.023 V</text>
<text x="264.20" y="215.13" transform="rotate(0.03 264.20 215.13)">GPU Power</text>
<text x="405.50" y="215.13" transform="rotate(0.03 405.50 215.13)" text-anchor="end">0.000 W</text>
<text x="444.20" y="215.13" transform="rotate(0.03 444.20 215.13)" text-anchor="end">0.000 W</text>
<text x="482.90" y="215.13" transform="rotate(0.03 482.90 215.13)" text-anchor="end">9.004 W</text>
<text x="272.20" y="223.37" transform="rotate(0.03 272.20 223.37)">GPU Core (NVVDD) Input Power (sum)</text>
<text x="405.50" y="223.37" transform="rotate(0.03 405.50 223.37)" text-anchor="end">0.000 W</text>
<text x="444.20" y="223.37" transform="rotate(0.03 444.20 223.37)" text-anchor="end">0.000 W</text>
<text x="482.90" y="223.37" transform="rotate(0.03 482.90 223.37)" text-anchor="end">3.092 W</text>
<text x="272.20" y="231.61" transform="rotate(0.03 272.20 231.61)">GPU FBVDD Input Power</text>
<text x="405.50" y="231.61" transform="rotate(0.03 405.50 231.61)" text-anchor="end">0.000 W</text>
<text x="444.20" y="231.61" transform="rotate(0.03 444.20 231.61)" text-anchor="end">0.000 W</text>
<text x="482.90" y="231.61" transform="rotate(0.03 482.90 231.61)" text-anchor="end">2.827 W</text>
<text x="272.20" y="239.85" transform="rotate(0.03 272.20 239.85)">GPU 8-pin #1 Input Power</text>
<text x="405.50" y="239.85" transform="rotate(0.03 405.50 239.85)" text-anchor="end">0.000 W</text>
<text x="444.20" y="239.85" transform="rotate(0.03 444.20 239.85)" text-anchor="end">0.000 W</text>
<text x="482.90" y="239.85" transform="rotate(0.03 482.90 239.85)" text-anchor="end">5.899 W</text>
<text x="272.20" y="248.09" transform="rotate(0.03 272.20 248.09)">GPU Core (NVVDD2) Input Power (sum)</text>
<text x="405.50" y="248.09" transform="rotate(0.03 405.50 248.09)" text-anchor="end">0.000 W</text>
<text x="444.20" y="248.09" transform="rotate(0.03 444.20 248.09)" text-anchor="end">0.000 W</text>
<text x="482.90" y="248.09" transform="rotate(0.03 482.90 248.09)" text-anchor="end">3.092 W</text>
<text x="272.20" y="256.33" transform="rotate(0.03 272.20 256.33)">GPU Input PP Source Power (sum)</text>
<text x="405.50" y="256.33" transform="rotate(0.03 405.50 256.33)" text-anchor="end">0.000 W</text>
<text x="444.20" y="256.33" transform="rotate(0.03 444.20 256.33)" text-anchor="end">0.000 W</text>
<text x="482.90" y="256.33" transform="rotate(0.03 482.90 256.33)" text-anchor="end">5.936 W</text>
<text x="272.20" y="264.57" transform="rotate(0.03 272.20 264.57)">GPU Core (NVVDD) Output Power</text>
<text x="405.50" y="264.57" transform="rotate(0.03 405.50 264.57)" text-anchor="end">0.000 W</text>
<text x="444.20" y="264.57" transform="rotate(0.03 444.20 264.57)" text-anchor="end">0.000 W</text>
<text x="482.90" y="264.57" transform="rotate(0.03 482.90 264.57)" text-anchor="end">1.375 W</text>
<text x="272.20" y="272.81" transform="rotate(0.03 272.20 272.81)">GPU Core (NVVDD) Output Power</text>
<text x="405.50" y="272.81" transform="rotate(0.03 405.50 272.81)" text-anchor="end">0.000 W</text>
<text x="444.20" y="272.81" transform="rotate(0.03 444.20 272.81)" text-anchor="end">0.000 W</text>
<text x="482.90" y="272.81" transform="rotate(0.03 482.90 272.81)" text-anchor="end">5.528 W</text>
<text x="264.20" y="281.05" transform="rotate(0.03 264.20 281.05)">GPU Clock</text>
<text x="405.50" y="281.05" transform="rotate(0.03 405.50 281.05)" text-anchor="end">0.0 MHz</text>
<text x="444.20" y="281.05" transform="rotate(0.03 444.20 281.05)" text-anchor="end">0.0 MHz</text>
<text x="482.90" y="281.05" transform="rotate(0.03 482.90 281.05)" text-anchor="end">1,500.0 MHz</text>
<text x="264.20" y="289.29" transform="rotate(0.03 264.20 289.29)">GPU Memory Clock</text>
<text x="405.50" y="289.29" transform="rotate(0.03 405.50 289.29)" text-anchor="end">0.0 MHz</text>
<text x="444.20" y="289.29" transform="rotate(0.03 444.20 289.29)" text-anchor="end">0.0 MHz</text>
<text x="482.90" y="289.29" transform="rotate(0.03 482.90 289.29)" text-anchor="end">1,500.2 MHz</text>
<text x="264.20" y="297.53" transform="rotate(0.03 264.20 297.53)">GPU Video Clock</text>
<text x="405.50" y="297.53" transform="rotate(0.03 405.50 297.53)" text-anchor="end">0.0 MHz</text>
<text x="444.20" y="297.53" transform="rotate(0.03 444.20 297.53)" text-anchor="end">0.0 MHz</text>
<text x="482.90" y="297.53" transform="rotate(0.03 482.90 297.53)" text-anchor="end">1,327.0 MHz</text>
<text x="264.20" y="305.77" transform="rotate(0.03 264.20 305.77)">GPU Effective Clock</text>
<text x="405.50" y="305.77" transform="rotate(0.03 405.50 305.77)" text-anchor="end">0.0 MHz</text>
<text x="444.20" y="305.77" transform="rotate(0.03 444.20 305.77)" text-anchor="end">0.0 MHz</text>
<text x="482.90" y="305.77" transform="rotate(0.03 482.90 305.77)" text-anchor="end">1,499.9 MHz</text>
<text x="264.20" y="314.01" transform="rotate(0.03 264.20 314.01)">GPU Core Load</text>
<text x="405.50" y="314.01" transform="rotate(0.03 405.50 314.01)" text-anchor="end">0.0 %</text>
<text x="444.20" y="314.01" transform="rotate(0.03 444.20 314.01)" text-anchor="end">0.0 %</text>
<text x="482.90" y="314.01" transform="rotate(0.03 482.90 314.01)" text-anchor="end">0.0 %</text>
<text x="264.20" y="322.25" transform="rotate(0.03 264.20 322.25)">GPU Memory Controller Load</text>
<text x="405.50" y="322.25" transform="rotate(0.03 405.50 322.25)" text-anchor="end">0.0 %</text>
<text x="444.20" y="322.25" transform="rotate(0.03 444.20 322.25)" text-anchor="end">0.0 %</text>
<text x="482.90" y="322.25" transform="rotate(0.03 482.90 322.25)" text-anchor="end">0.0 %</text>
<text x="264.20" y="330.49" transform="rotate(0.03 264.20 330.49)">GPU Video Engine Load</text>
<text x="405.50" y="330.49" transform="rotate(0.03 405.50 330.49)" text-anchor="end">0.0 %</text>
<text x="444.20" y="330.49" transform="rotate(0.03 444.20 330.49)" text-anchor="end">0.0 %</text>
<text x="482.90" y="330.49" transform="rotate(0.03 482.90 330.49)" text-anchor="end">0.0 %</text>
<text x="264.20" y="338.73" transform="rotate(0.03 264.20 338.73)">GPU Bus Load</text>
<text x="405.50" y="338.73" transform="rotate(0.03 405.50 338.73)" text-anchor="end">0.0 %</text>
<text x="444.20" y="338.73" transform="rotate(0.03 444.20 338.73)" text-anchor="end">0.0 %</text>
<text x="482.90" y="338.73" transform="rotate(0.03 482.90 338.73)" text-anchor="end">0.0 %</text>
<text x="264.20" y="346.97" transform="rotate(0.03 264.20 346.97)">GPU Memory Usage</text>
<text x="405.50" y="346.97" transform="rotate(0.03 405.50 346.97)" text-anchor="end">0.0 %</text>
<text x="444.20" y="346.97" transform="rotate(0.03 444.20 346.97)" text-anchor="end">0.0 %</text>
<text x="482.90" y="346.97" transform="rotate(0.03 482.90 346.97)" text-anchor="end">2.7 %</text>
<text x="272.20" y="355.21" transform="rotate(0.03 272.20 355.21)">GPU D3D Usages</text>
<text x="444.20" y="355.21" transform="rotate(0.03 444.20 355.21)" text-anchor="end">0.0 %</text>
<text x="482.90" y="355.21" transform="rotate(0.03 482.90 355.21)" text-anchor="end">0.0 %</text>
<text x="264.20" y="363.45" transform="rotate(0.03 264.20 363.45)">GPU D3D Usage</text>
<text x="405.50" y="363.45" transform="rotate(0.03 405.50 363.45)" text-anchor="end">0.0 %</text>
<text x="444.20" y="363.45" transform="rotate(0.03 444.20 363.45)" text-anchor="end">0.0 %</text>
<text x="482.90" y="363.45" transform="rotate(0.03 482.90 363.45)" text-anchor="end">0.0 %</text>
<text x="264.20" y="371.69" transform="rotate(0.03 264.20 371.69)">GPU Memory Allocated</text>
<text x="405.50" y="371.69" transform="rotate(0.03 405.50 371.69)" text-anchor="end">0 MB</text>
<text x="444.20" y="371.69" transform="rotate(0.03 444.20 371.69)" text-anchor="end">0 MB</text>
<text x="482.90" y="371.69" transform="rotate(0.03 482.90 371.69)" text-anchor="end">109 MB</text>
<text x="264.20" y="379.93" transform="rotate(0.03 264.20 379.93)">GPU D3D Memory Dedicated</text>
<text x="405.50" y="379.93" transform="rotate(0.03 405.50 379.93)" text-anchor="end">0 MB</text>
<text x="444.20" y="379.93" transform="rotate(0.03 444.20 379.93)" text-anchor="end">0 MB</text>
<text x="482.90" y="379.93" transform="rotate(0.03 482.90 379.93)" text-anchor="end">8 MB</text>
<text x="264.20" y="388.17" transform="rotate(0.03 264.20 388.17)">GPU D3D Memory Dynamic</text>
<text x="405.50" y="388.17" transform="rotate(0.03 405.50 388.17)" text-anchor="end">0 MB</text>
<text x="444.20" y="388.17" transform="rotate(0.03 444.20 388.17)" text-anchor="end">0 MB</text>
<text x="482.90" y="388.17" transform="rotate(0.03 482.90 388.17)" text-anchor="end">7 MB</text>
<text x="264.20" y="396.41" transform="rotate(0.03 264.20 396.41)">PCIe Link Speed</text>
<text x="405.50" y="396.41" transform="rotate(0.03 405.50 396.41)" text-anchor="end">0.0 GT/s</text>
<text x="444.20" y="396.41" transform="rotate(0.03 444.20 396.41)" text-anchor="end">0.0 GT/s</text>
<text x="482.90" y="396.41" transform="rotate(0.03 482.90 396.41)" text-anchor="end">16.0 GT/s</text>
<text x="405.50" y="404.65" transform="rotate(0.03 405.50 404.65)" text-anchor="end">Yes</text>
<text x="444.20" y="404.65" transform="rotate(0.03 444.20 404.65)" text-anchor="end">No</text>
<text x="482.90" y="404.65" transform="rotate(0.03 482.90 404.65)" text-anchor="end">Yes</text>
<text x="272.20" y="412.89" transform="rotate(0.03 272.20 412.89)">GPU Performance Limiters</text>
<text x="405.50" y="412.89" transform="rotate(0.03 405.50 412.89)" text-anchor="end">Yes</text>
<text x="444.20" y="412.89" transform="rotate(0.03 444.20 412.89)" text-anchor="end">No</text>
<text x="482.90" y="412.89" transform="rotate(0.03 482.90 412.89)" text-anchor="end">Yes</text>
<text x="373.80" y="505.40" transform="rotate(0.03 373.80 505.40)" class="tm">0:05:52</text></svg>
</body></html>
